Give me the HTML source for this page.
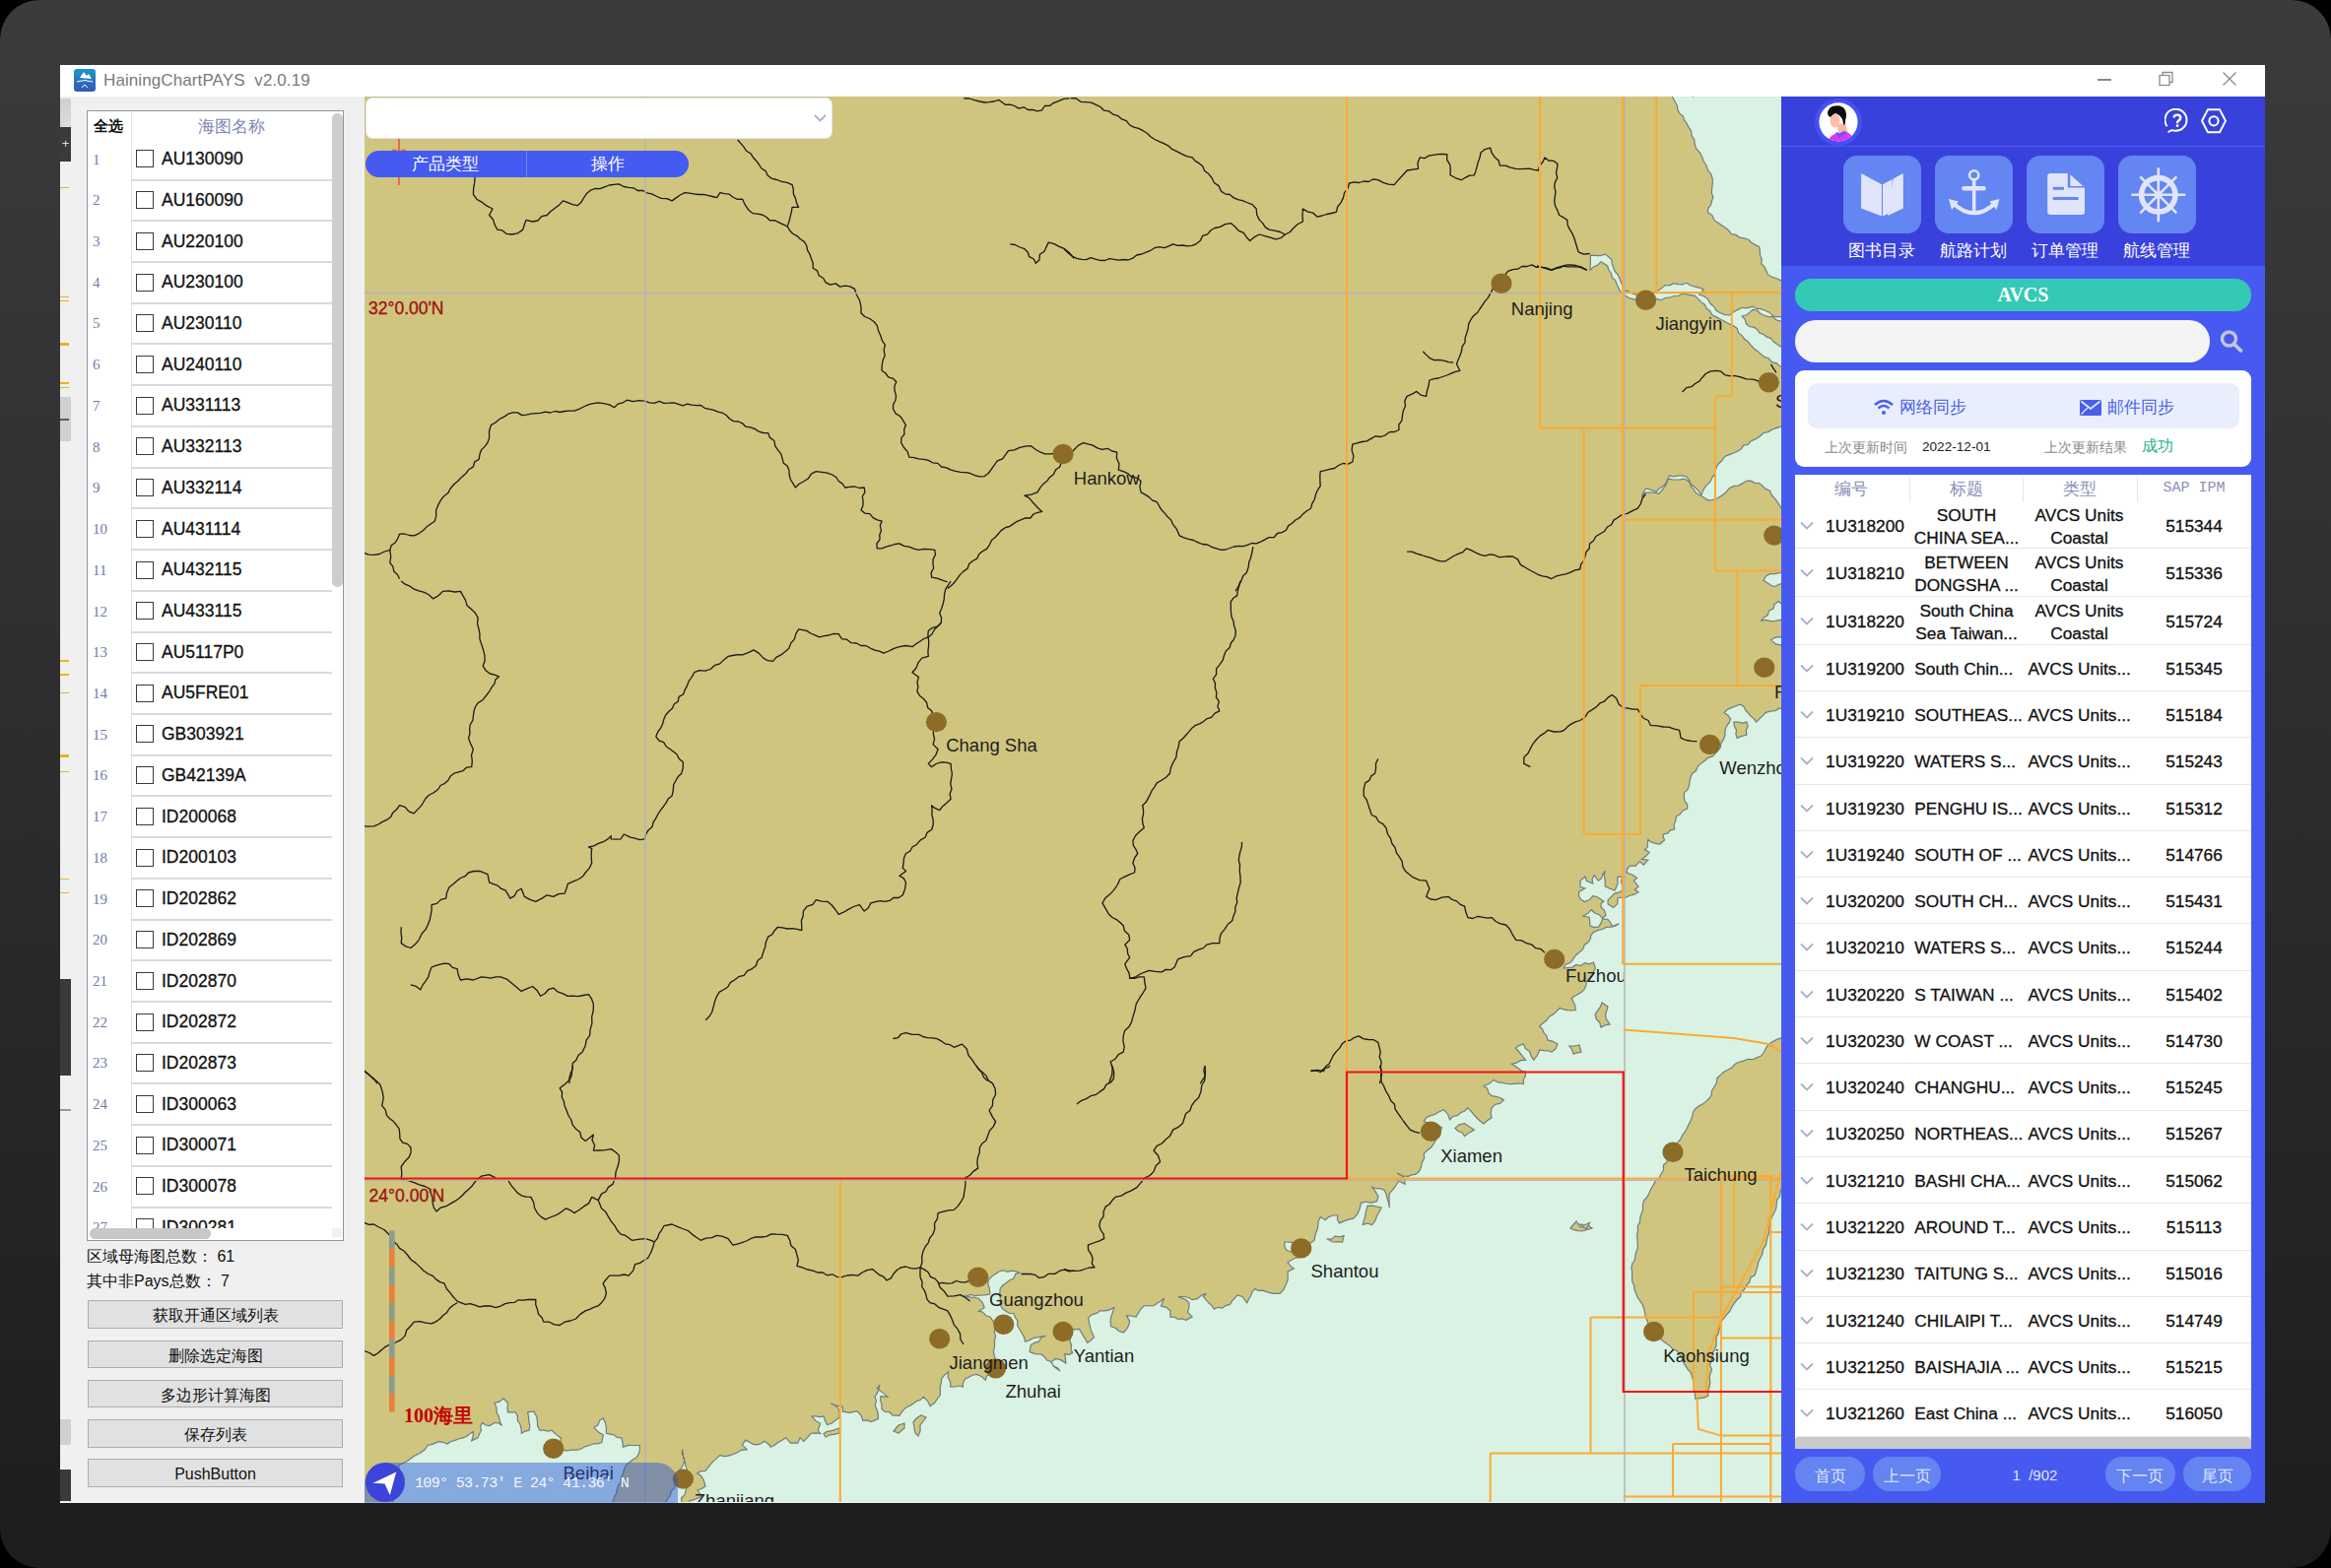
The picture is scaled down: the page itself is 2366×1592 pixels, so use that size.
<!DOCTYPE html>
<html><head><meta charset="utf-8">
<style>
*{margin:0;padding:0;box-sizing:border-box;}
html,body{width:2366px;height:1592px;overflow:hidden;background:#000;font-family:"Liberation Sans",sans-serif;}
.frame{position:absolute;left:0;top:0;width:2366px;height:1592px;border-radius:40px;background:linear-gradient(#3b3b3d,#1c1d1d);}
.abs{position:absolute;}
.win{position:absolute;left:61px;top:66px;width:2238px;height:1460px;background:#f0f0f0;overflow:hidden;}
.title{position:absolute;left:0;top:0;width:2238px;height:32px;background:#fff;}
.title .ttl{position:absolute;left:44px;top:6px;font-size:17px;color:#7a7a7a;letter-spacing:0.1px;white-space:pre;}
.appicon{position:absolute;left:14px;top:4px;width:22px;height:23px;border-radius:3px;background:linear-gradient(#1598c9,#3656b2);}
.strip{position:absolute;left:0;top:32px;width:11px;height:1428px;background:#f0f0f0;}
.tbl{position:absolute;left:27px;top:46px;width:261px;height:1148px;background:#fff;border:1.5px solid #8d95a8;overflow:hidden;}
.lr{position:absolute;left:0;width:258px;height:41.72px;}
.ln{position:absolute;left:5px;top:12px;font-size:15px;color:#737aaa;font-family:"Liberation Serif",serif;}
.cb{position:absolute;left:49px;top:10.8px;width:18px;height:18px;border:1.6px solid #3a3a3a;background:#fff;}
.lt{position:absolute;left:75px;top:9.5px;font-size:17.5px;color:#111;-webkit-text-stroke:0.3px #111;}
.sep{position:absolute;left:44px;top:40px;width:204px;height:2px;background:#d9d9e3;}
.ncol{position:absolute;left:44px;top:0;width:1px;height:1148px;background:#e3e3ea;}
.vscroll{position:absolute;left:248px;top:2px;width:10.8px;height:480.5px;background:#cdcdcd;border-radius:5.4px;}
.hscroll{position:absolute;left:2px;top:1134px;width:123px;height:11px;background:#c8c8c8;border-radius:6px;}
.btn{position:absolute;left:28px;width:259px;height:28.5px;background:#e1e1e1;border:1px solid #adadad;font-size:16px;color:#111;text-align:center;line-height:30px;}
.cnt{position:absolute;left:27px;font-size:16px;color:#111;}
.map{position:absolute;left:309px;top:32px;}
.dd{position:absolute;left:309.5px;top:33px;width:474px;height:41.5px;background:#fff;border:1px solid #dde1f0;border-radius:7px;}
.tabs{position:absolute;left:309.5px;top:86.7px;width:328.5px;height:27.5px;background:#445af1;border-radius:14px;color:#fff;font-size:16.5px;}
.tabs .t1{position:absolute;left:0;width:163px;top:3px;text-align:center;}
.tabs .t2{position:absolute;left:164px;width:164px;top:3px;text-align:center;}
.tabs .sp{position:absolute;left:163px;top:0;width:1px;height:27.5px;background:#7787f5;}
.pill{position:absolute;left:309px;top:1419.2px;width:317.6px;height:41px;border-radius:0 21px 0 0;background:rgba(33,79,216,0.45);border-top-right-radius:21px;border-top-left-radius:21px;}
.nav{position:absolute;left:310px;top:1419px;width:40px;height:40px;border-radius:20px;background:#3c44d9;}
.coord{position:absolute;left:360px;top:1432px;font-family:"Liberation Mono",monospace;font-size:15px;color:#f4f6ff;white-space:pre;letter-spacing:-0.65px;}
.rp{position:absolute;left:1747px;top:32px;width:491px;height:1428px;background:#465af2;}
.rph{position:absolute;left:0;top:0;width:491px;height:172px;background:#3941dc;}
.rpline{position:absolute;left:0;top:50px;width:491px;height:1px;background:#4c5cf0;}
.tile{position:absolute;top:59.7px;width:79px;height:79px;border-radius:14px;background:#6386f2;}
.tlab{position:absolute;top:145px;width:100px;text-align:center;color:#fff;font-size:16.7px;}
.avcs{position:absolute;left:14px;top:185px;width:463px;height:33px;border-radius:16px;background:#33c9b5;color:#fff;font-family:"Liberation Serif",serif;font-weight:bold;font-size:20px;text-align:center;line-height:33px;}
.search{position:absolute;left:14px;top:227px;width:421px;height:43px;border-radius:21px;background:#f4f4f4;}
.card{position:absolute;left:14px;top:278px;width:463px;height:98px;border-radius:9px;background:#fff;}
.inner{position:absolute;left:13px;top:13px;width:438px;height:46px;border-radius:9px;background:#e8eefc;color:#4a60ea;font-size:17px;}
.small{position:absolute;font-size:13.6px;color:#8a8a8a;top:70px;}
.table{position:absolute;left:14px;top:384px;width:463px;height:989px;background:#fff;overflow:hidden;}
.th{position:absolute;top:0;height:28px;width:463px;color:#8a90b8;font-size:17px;}
.th div{position:absolute;top:3px;text-align:center;}
.th .hs{position:absolute;top:2px;width:1px;height:26px;background:#e6e6ee;}
.tr{position:absolute;left:0;width:463px;height:47.35px;color:#111;font-size:17.3px;-webkit-text-stroke:0.3px #111;border-bottom:1.5px solid #e5e6f0;}
.tr div{position:absolute;text-align:center;line-height:23.5px;top:50%;transform:translateY(-50%);margin-top:1.5px;white-space:nowrap;}
.tr div.l2{text-align:left;left:121.3px;width:auto;}
.tr div.l3{text-align:left;left:236.5px;width:auto;}
.c1{left:28px;width:86px;}
.c2{left:116px;width:116px;}
.c3{left:232px;width:113px;}
.c4{left:345px;width:120px;}
.chev{position:absolute;left:5px;top:50%;margin-top:-4.5px;}
.hsb{position:absolute;left:0;top:977px;width:463px;height:12px;background:#c9c9c9;border-radius:4px 4px 0 0;}
.pg{position:absolute;top:1381px;height:35px;border-radius:17px;background:#6384f1;color:#dfe5fd;font-size:16px;text-align:center;line-height:39px;}
</style></head><body>
<div class="frame"></div>
<div class="win">
  <div class="title">
    <div class="appicon"><svg width="22" height="23" viewBox="0 0 22 23"><path d="M6,9 L10,3 L13,7 L15,5 L18,10 Z" fill="#fff"/><path d="M3,13 Q11,10 19,13" fill="none" stroke="#fff" stroke-width="1"/><path d="M8,19 L11,16 L14,19" fill="none" stroke="#fff" stroke-width="1"/></svg></div>
    <div class="ttl">HainingChartPAYS  v2.0.19</div>
    <div class="abs" style="left:2068px;top:14px;width:14px;height:1.5px;background:#8a8a8a"></div>
    <svg class="abs" style="left:2130px;top:6px" width="16" height="16" viewBox="0 0 16 16"><rect x="1" y="4.5" width="10" height="10" fill="none" stroke="#8a8a8a" stroke-width="1.3"/><polyline points="4,4.5 4,1.5 14,1.5 14,11.5 11,11.5" fill="none" stroke="#8a8a8a" stroke-width="1.3"/></svg>
    <svg class="abs" style="left:2194px;top:6px" width="16" height="16" viewBox="0 0 16 16"><path d="M1.5,1.5 L14.5,14.5 M14.5,1.5 L1.5,14.5" stroke="#8a8a8a" stroke-width="1.3"/></svg>
  </div>
  <div class="strip">
    <div class="abs" style="left:0px;top:1.6px;width:11px;height:29.8px;background:linear-gradient(#cfcfcf,#dddddd)"></div>
    <div class="abs" style="left:0px;top:31.4px;width:11px;height:34.5px;background:#3a3a3a"></div>
    <div class="abs" style="left:0px;top:91.7px;width:9px;height:1.6px;background:#f2b01e"></div>
    <div class="abs" style="left:0px;top:202.8px;width:9px;height:1.6px;background:#f2b01e"></div>
    <div class="abs" style="left:0px;top:206.5px;width:9px;height:1.6px;background:#f2b01e"></div>
    <div class="abs" style="left:0px;top:290.0px;width:9px;height:1.6px;background:#f2b01e"></div>
    <div class="abs" style="left:0px;top:294.6px;width:9px;height:1.6px;background:#f2b01e"></div>
    <div class="abs" style="left:0px;top:572.4px;width:9px;height:1.6px;background:#f2b01e"></div>
    <div class="abs" style="left:0px;top:586.2px;width:9px;height:1.6px;background:#f2b01e"></div>
    <div class="abs" style="left:0px;top:604.5px;width:9px;height:1.6px;background:#f2b01e"></div>
    <div class="abs" style="left:0px;top:684.9px;width:9px;height:1.6px;background:#f2b01e"></div>
    <div class="abs" style="left:0px;top:793.8px;width:9px;height:1.6px;background:#f2b01e"></div>
    <div class="abs" style="left:0px;top:807.6px;width:9px;height:1.6px;background:#f2b01e"></div>
    <div class="abs" style="left:0px;top:250.3px;width:9px;height:3.0px;background:#f2b01e"></div>
    <div class="abs" style="left:0px;top:668.1px;width:9px;height:3.0px;background:#f2b01e"></div>
    <div class="abs" style="left:0px;top:304.6px;width:11px;height:45.9px;background:#d0d0d0"></div>
    <div class="abs" style="left:0px;top:327.0px;width:9px;height:1.5px;background:#5a5a5a"></div>
    <div class="abs" style="left:0px;top:895.7px;width:11px;height:98.7px;background:#3a3a3a"></div>
    <div class="abs" style="left:0px;top:1028.0px;width:11px;height:1.5px;background:#9a9a9a"></div>
    <div class="abs" style="left:0px;top:1343.0px;width:11px;height:25.6px;background:#d0d0d0"></div>
    <div class="abs" style="left:0px;top:1393.8px;width:11px;height:32.2px;background:#3a3a3a"></div>
    <div class="abs" style="left:0;top:31.4px;width:11px;height:34.5px;color:#ddd;font-size:13px;line-height:34px;text-align:center">+</div>
  </div>
  <div class="tbl">
    <div class="ncol"></div>
    <div class="abs" style="left:6px;top:6px;font-size:15px;font-weight:bold;color:#111">全选</div>
    <div class="abs" style="left:112px;top:4px;font-size:17px;color:#8188b5">海图名称</div>
<div class="lr" style="top:28.60px"><span class="ln">1</span><span class="cb"></span><span class="lt">AU130090</span><div class="sep"></div></div>
<div class="lr" style="top:70.32px"><span class="ln">2</span><span class="cb"></span><span class="lt">AU160090</span><div class="sep"></div></div>
<div class="lr" style="top:112.04px"><span class="ln">3</span><span class="cb"></span><span class="lt">AU220100</span><div class="sep"></div></div>
<div class="lr" style="top:153.76px"><span class="ln">4</span><span class="cb"></span><span class="lt">AU230100</span><div class="sep"></div></div>
<div class="lr" style="top:195.48px"><span class="ln">5</span><span class="cb"></span><span class="lt">AU230110</span><div class="sep"></div></div>
<div class="lr" style="top:237.20px"><span class="ln">6</span><span class="cb"></span><span class="lt">AU240110</span><div class="sep"></div></div>
<div class="lr" style="top:278.92px"><span class="ln">7</span><span class="cb"></span><span class="lt">AU331113</span><div class="sep"></div></div>
<div class="lr" style="top:320.64px"><span class="ln">8</span><span class="cb"></span><span class="lt">AU332113</span><div class="sep"></div></div>
<div class="lr" style="top:362.36px"><span class="ln">9</span><span class="cb"></span><span class="lt">AU332114</span><div class="sep"></div></div>
<div class="lr" style="top:404.08px"><span class="ln">10</span><span class="cb"></span><span class="lt">AU431114</span><div class="sep"></div></div>
<div class="lr" style="top:445.80px"><span class="ln">11</span><span class="cb"></span><span class="lt">AU432115</span><div class="sep"></div></div>
<div class="lr" style="top:487.52px"><span class="ln">12</span><span class="cb"></span><span class="lt">AU433115</span><div class="sep"></div></div>
<div class="lr" style="top:529.24px"><span class="ln">13</span><span class="cb"></span><span class="lt">AU5117P0</span><div class="sep"></div></div>
<div class="lr" style="top:570.96px"><span class="ln">14</span><span class="cb"></span><span class="lt">AU5FRE01</span><div class="sep"></div></div>
<div class="lr" style="top:612.68px"><span class="ln">15</span><span class="cb"></span><span class="lt">GB303921</span><div class="sep"></div></div>
<div class="lr" style="top:654.40px"><span class="ln">16</span><span class="cb"></span><span class="lt">GB42139A</span><div class="sep"></div></div>
<div class="lr" style="top:696.12px"><span class="ln">17</span><span class="cb"></span><span class="lt">ID200068</span><div class="sep"></div></div>
<div class="lr" style="top:737.84px"><span class="ln">18</span><span class="cb"></span><span class="lt">ID200103</span><div class="sep"></div></div>
<div class="lr" style="top:779.56px"><span class="ln">19</span><span class="cb"></span><span class="lt">ID202862</span><div class="sep"></div></div>
<div class="lr" style="top:821.28px"><span class="ln">20</span><span class="cb"></span><span class="lt">ID202869</span><div class="sep"></div></div>
<div class="lr" style="top:863.00px"><span class="ln">21</span><span class="cb"></span><span class="lt">ID202870</span><div class="sep"></div></div>
<div class="lr" style="top:904.72px"><span class="ln">22</span><span class="cb"></span><span class="lt">ID202872</span><div class="sep"></div></div>
<div class="lr" style="top:946.44px"><span class="ln">23</span><span class="cb"></span><span class="lt">ID202873</span><div class="sep"></div></div>
<div class="lr" style="top:988.16px"><span class="ln">24</span><span class="cb"></span><span class="lt">ID300063</span><div class="sep"></div></div>
<div class="lr" style="top:1029.88px"><span class="ln">25</span><span class="cb"></span><span class="lt">ID300071</span><div class="sep"></div></div>
<div class="lr" style="top:1071.60px"><span class="ln">26</span><span class="cb"></span><span class="lt">ID300078</span><div class="sep"></div></div>
<div class="lr" style="top:1113.32px"><span class="ln">27</span><span class="cb"></span><span class="lt">ID300281</span><div class="sep"></div></div>
    <div class="vscroll"></div>
    <div class="abs" style="left:0;top:1133.5px;width:258px;height:13px;background:#fff"></div>
    <div class="hscroll"></div>
    <div class="abs" style="left:248px;top:1133.8px;width:10px;height:9.5px;background:#f0f0f0"></div>
  </div>
  <div class="cnt" style="top:1200px">区域母海图总数：  61</div>
  <div class="cnt" style="top:1224.5px">其中非Pays总数：  7</div>
  <div class="btn" style="top:1254.3px">获取开通区域列表</div>
  <div class="btn" style="top:1294.5px">删除选定海图</div>
  <div class="btn" style="top:1334.6px">多边形计算海图</div>
  <div class="btn" style="top:1375px">保存列表</div>
  <div class="btn" style="top:1415.3px">PushButton</div>
  <svg class="map" width="1438" height="1427" viewBox="370 98 1438 1427" xmlns="http://www.w3.org/2000/svg">
<defs><clipPath id="cf"><rect x="370" y="98" width="1278" height="1427"/></clipPath></defs>
<rect x="370" y="98" width="1438" height="1427" fill="#cfc57e"/>
<polygon points="1697.7,98.7 1699.9,102.8 1702.2,107.0 1703.1,111.7 1705.0,115.4 1708.4,118.0 1709.6,122.1 1712.1,125.4 1714.0,129.0 1716.6,133.0 1717.0,137.7 1719.7,141.7 1720.2,146.3 1721.6,150.7 1725.1,154.5 1727.5,158.9 1729.2,163.7 1731.9,168.0 1733.5,172.8 1736.7,176.7 1738.2,181.4 1738.3,186.2 1737.7,191.1 1737.3,195.9 1738.9,200.6 1737.4,204.3 1736.5,208.3 1733.7,211.6 1733.5,215.8 1737.9,218.6 1740.1,223.7 1744.3,226.6 1747.9,228.9 1751.4,231.3 1754.7,234.0 1757.3,237.5 1761.8,238.4 1765.8,241.1 1770.4,241.8 1774.6,243.3 1777.8,246.3 1781.6,248.6 1785.5,250.5 1786.4,254.8 1786.5,259.2 1788.3,263.4 1787.7,267.8 1790.9,270.9 1792.7,274.7 1794.2,278.7 1798.7,281.3 1803.7,282.8 1808.3,285.2 1811.6,285.2 1811.1,281.2 1811.8,277.2 1811.4,273.1 1811.0,269.1 1812.3,265.1 1812.1,261.1 1810.9,257.1 1811.8,253.1 1811.6,249.1 1812.5,245.0 1812.2,241.0 1811.0,237.0 1812.8,233.0 1810.6,229.0 1811.4,225.0 1812.2,221.0 1810.7,216.9 1811.5,212.9 1810.4,208.9 1812.0,204.9 1812.3,200.9 1811.8,196.9 1812.5,192.9 1811.1,188.8 1812.1,184.8 1811.8,180.8 1811.8,176.8 1811.5,172.8 1812.5,168.8 1812.7,164.8 1811.5,160.7 1812.0,156.7 1810.4,152.7 1812.1,148.7 1811.9,144.7 1812.8,140.7 1812.4,136.6 1811.0,132.6 1811.3,128.6 1812.0,124.6 1810.3,120.6 1811.5,116.6 1810.7,112.6 1810.6,108.5 1810.4,104.5 1812.3,100.5 1811.6,96.5 1807.5,97.5 1803.4,97.2 1799.4,96.8 1795.3,95.5 1791.2,97.6 1787.2,96.6 1783.1,96.4 1779.0,95.5 1775.0,95.7 1770.9,95.6 1766.8,97.1 1762.8,96.7 1758.7,96.9 1754.6,95.5 1750.6,95.3 1746.5,97.4 1742.4,97.3 1738.4,97.2 1734.3,97.2 1730.2,96.5 1726.2,96.3 1722.1,97.1 1718.0,97.8 1714.0,96.7 1709.9,96.8 1705.8,96.3 1701.8,95.3 1697.7,96.5 1697.7,98.7" fill="#d9f2e3" stroke="#6f7d7d" stroke-width="1.2"/>
<polygon points="1743.3,472.0 1747.4,468.0 1750.8,463.4 1755.2,461.6 1759.6,460.0 1763.9,458.0 1767.4,455.9 1769.7,452.1 1774.2,451.5 1776.9,448.2 1781.6,445.9 1786.1,443.2 1789.9,439.5 1794.7,438.6 1799.0,436.0 1803.6,434.4 1808.3,433.0 1811.6,433.0 1812.6,437.1 1811.2,441.1 1812.7,445.1 1812.7,449.2 1812.3,453.2 1812.4,457.3 1812.0,461.3 1812.7,465.3 1812.9,469.4 1812.5,473.4 1812.6,477.5 1811.9,481.5 1812.8,485.6 1810.6,489.6 1811.3,493.6 1812.5,497.7 1812.2,501.7 1812.0,505.8 1811.9,509.8 1812.5,513.8 1810.7,517.9 1811.6,521.9 1810.5,517.7 1807.2,514.7 1805.1,511.1 1802.1,506.8 1798.4,503.0 1796.4,498.1 1792.2,496.4 1788.9,493.3 1785.5,490.5 1781.1,490.4 1777.0,488.2 1772.5,488.3 1768.5,490.9 1764.3,493.1 1759.5,493.7 1755.2,495.7 1752.2,499.5 1748.7,502.4 1743.3,505.7 1738.6,507.6 1733.5,507.8 1729.2,505.0 1724.8,502.4 1721.1,500.4 1719.1,496.6 1716.1,493.7 1715.1,488.4 1711.8,484.0 1707.5,482.8 1703.2,482.9 1698.8,483.8 1694.5,482.9 1692.6,486.7 1690.9,490.6 1688.0,493.7 1684.2,495.9 1681.4,499.2 1676.0,497.4 1670.6,495.9 1667.8,499.9 1666.3,504.6 1669.5,500.2 1674.3,500.2 1679.0,500.2 1683.6,501.3 1686.7,498.0 1689.6,494.4 1691.7,490.4 1693.4,486.1 1697.4,486.9 1701.5,487.0 1705.6,486.8 1709.6,486.1 1713.7,488.5 1716.8,492.0 1720.5,494.8 1724.0,498.4 1727.0,502.4 1728.9,497.4 1731.7,493.1 1735.7,489.4 1737.9,484.8 1741.1,480.7 1741.6,476.2 1743.3,472.0" fill="#d9f2e3" stroke="#6f7d7d" stroke-width="1.2"/>
<polygon points="1614.2,259.2 1619.3,259.3 1624.4,259.6 1629.4,258.1 1632.7,260.7 1635.9,263.5 1636.3,267.8 1637.7,271.8 1639.3,275.7 1642.2,279.1 1644.0,282.9 1645.5,286.8 1647.1,290.7 1647.8,294.9 1652.8,295.7 1657.1,298.1 1661.9,299.3 1667.0,299.5 1671.8,298.5 1676.6,296.8 1681.4,296.0 1686.0,293.1 1690.1,289.5 1694.5,289.9 1698.7,287.6 1703.2,288.6 1707.6,288.8 1711.8,287.3 1715.9,289.7 1720.3,291.2 1724.8,292.2 1729.2,293.9 1724.8,299.3 1729.5,300.7 1733.5,303.6 1735.8,308.0 1739.6,311.3 1742.2,315.5 1746.3,317.7 1750.5,319.6 1755.2,319.9 1759.4,317.1 1763.7,314.6 1768.2,312.3 1773.7,312.9 1779.0,311.2 1782.9,313.4 1787.5,313.7 1791.6,315.2 1795.6,316.9 1799.0,320.3 1803.1,321.7 1807.8,321.7 1811.6,324.2 1810.7,328.4 1810.3,332.5 1811.2,336.7 1812.0,340.8 1811.4,345.0 1812.5,349.2 1812.8,353.3 1810.3,357.5 1811.2,361.6 1811.5,365.8 1810.4,369.9 1811.6,374.1 1807.2,372.1 1803.3,368.9 1798.6,367.6 1795.5,364.0 1790.9,362.4 1787.3,359.4 1783.8,356.4 1780.1,353.7 1776.9,350.2 1774.1,346.8 1770.6,344.2 1768.0,340.6 1764.6,337.9 1763.2,333.3 1759.5,330.7 1755.0,328.9 1750.8,326.5 1746.5,324.2 1742.3,321.9 1737.8,319.9 1735.9,316.0 1732.3,313.5 1730.5,309.4 1727.0,306.9 1723.7,303.6 1720.5,300.4 1716.2,299.6 1711.8,298.9 1707.5,298.2 1703.4,300.5 1698.8,300.5 1694.7,302.2 1690.1,302.5 1686.0,304.7 1681.3,303.5 1677.3,306.0 1672.8,306.1 1668.4,306.9 1663.5,304.9 1658.4,303.8 1653.3,302.5 1648.6,299.6 1644.6,296.0 1642.8,292.3 1641.0,288.5 1639.7,284.5 1636.2,281.6 1635.4,277.4 1632.8,274.0 1631.6,270.0 1625.1,265.7 1621.8,269.0 1617.4,270.9 1614.2,274.3 1614.2,269.3 1614.4,264.2 1614.2,259.2" fill="#d9f2e3" stroke="#6f7d7d" stroke-width="1.2"/>
<polygon points="1815.2,718.5 1810.5,718.8 1805.9,719.4 1801.6,721.6 1796.9,722.1 1792.4,723.4 1789.2,726.6 1785.9,729.9 1782.7,733.1 1780.3,729.8 1777.2,727.3 1774.6,724.1 1771.8,721.2 1770.0,717.5 1766.4,715.2 1762.1,716.8 1757.8,718.4 1753.7,720.3 1750.1,723.4 1753.8,726.2 1756.6,729.9 1754.9,733.9 1752.3,737.6 1750.9,741.8 1751.0,746.5 1749.4,750.6 1747.0,754.3 1746.3,758.8 1743.6,762.4 1740.8,765.4 1737.8,768.2 1733.6,769.4 1730.6,772.2 1726.8,774.9 1723.4,778.0 1721.5,782.6 1717.6,785.2 1716.0,789.4 1715.0,793.8 1714.4,798.2 1712.7,802.0 1709.5,804.7 1709.3,809.0 1709.9,813.1 1712.6,816.8 1712.7,821.0 1708.3,822.7 1705.3,826.6 1701.3,829.1 1700.8,833.4 1699.0,837.6 1699.7,842.1 1695.6,842.9 1692.5,846.2 1688.3,847.0 1688.2,850.0 1689.6,852.8 1684.7,857.0 1680.5,856.3 1676.3,855.3 1672.8,852.5 1672.4,856.5 1672.1,860.5 1669.3,862.6 1674.2,865.4 1670.6,869.2 1666.5,872.4 1672.8,873.1 1668.2,878.1 1664.4,874.6 1660.2,879.1 1654.5,879.1 1651.7,882.3 1651.0,886.1 1656.7,888.0 1661.6,891.4 1658.4,894.2 1663.0,900.2 1659.4,903.3 1663.0,905.8 1658.7,908.2 1653.8,909.2 1649.6,911.7 1646.8,911.0 1641.9,911.7 1641.9,917.3 1637.7,921.6 1632.1,918.0 1632.1,913.8 1635.6,910.3 1638.7,907.1 1643.1,906.2 1646.8,904.0 1646.6,899.3 1645.5,894.7 1646.8,890.0 1641.9,890.3 1641.9,897.7 1639.1,904.0 1634.0,902.3 1629.3,899.8 1629.1,893.8 1628.2,887.9 1629.3,884.4 1626.9,887.6 1625.6,891.6 1622.3,894.2 1618.1,888.6 1616.2,892.6 1616.7,897.0 1610.3,894.2 1608.9,890.0 1604.0,894.2 1604.0,900.5 1608.9,901.9 1602.6,905.4 1602.6,910.3 1605.1,913.5 1608.6,915.6 1613.4,913.6 1616.7,909.6 1620.9,910.5 1624.4,912.8 1627.9,915.2 1625.1,917.3 1625.1,920.9 1628.6,924.5 1630.0,929.3 1626.5,932.1 1623.2,928.7 1618.7,927.0 1615.3,923.7 1611.6,927.6 1606.8,930.0 1613.1,931.4 1613.7,935.6 1613.9,939.8 1617.9,941.6 1622.3,941.2 1625.1,937.4 1626.5,932.8 1632.1,933.5 1634.7,936.7 1636.3,940.5 1643.3,937.7 1639.5,940.3 1634.9,941.2 1630.4,941.4 1626.4,943.5 1622.2,944.4 1618.1,946.1 1614.6,949.6 1614.6,952.4 1612.2,956.6 1608.2,959.4 1606.7,963.7 1603.2,966.8 1599.6,969.7 1596.9,973.4 1594.3,977.3 1589.4,979.0 1587.0,983.0 1591.4,982.5 1595.8,982.1 1599.8,979.4 1604.6,980.5 1608.5,977.6 1613.2,978.8 1617.4,977.0 1619.4,983.0 1617.5,986.5 1615.7,990.2 1613.2,993.3 1610.4,996.3 1609.9,1000.7 1608.1,1004.3 1605.3,1007.3 1600.2,1010.3 1595.1,1013.4 1597.1,1017.2 1598.8,1021.1 1599.2,1025.5 1595.0,1025.9 1591.0,1025.7 1587.0,1024.8 1583.0,1023.5 1579.9,1026.9 1576.6,1029.9 1572.4,1032.1 1569.8,1036.0 1566.1,1038.7 1562.7,1041.7 1565.5,1044.8 1567.1,1048.6 1569.9,1051.7 1570.8,1055.9 1576.1,1057.3 1581.0,1060.0 1579.0,1064.8 1574.9,1068.1 1570.9,1066.8 1566.8,1066.6 1562.7,1066.0 1560.4,1071.5 1556.7,1076.2 1554.1,1072.2 1552.6,1067.5 1548.2,1064.6 1546.5,1060.0 1542.1,1061.3 1538.4,1064.0 1541.9,1068.0 1545.2,1072.1 1548.6,1076.2 1543.6,1076.7 1539.2,1079.1 1534.4,1080.2 1537.9,1082.2 1541.3,1084.7 1544.4,1087.4 1548.6,1088.3 1548.3,1092.4 1546.3,1096.3 1546.5,1100.5 1542.5,1100.0 1538.4,1100.1 1534.3,1100.7 1530.3,1100.5 1525.5,1099.5 1520.6,1098.9 1516.2,1096.4 1511.6,1100.3 1506.0,1102.5 1509.6,1105.2 1510.9,1109.6 1514.1,1112.6 1518.4,1113.4 1522.5,1114.5 1526.3,1116.7 1522.8,1120.3 1517.7,1121.4 1514.1,1124.8 1513.1,1129.8 1514.1,1134.9 1509.8,1137.6 1506.0,1141.0 1502.4,1138.2 1499.0,1135.0 1495.9,1131.7 1493.0,1128.1 1489.8,1124.8 1486.7,1128.0 1482.6,1129.8 1479.2,1132.6 1474.6,1133.5 1471.6,1136.9 1469.6,1131.2 1465.5,1126.8 1460.8,1128.7 1456.4,1131.5 1451.4,1132.9 1447.5,1135.0 1445.3,1138.9 1450.0,1140.0 1454.5,1141.6 1459.4,1142.2 1463.5,1145.0 1461.8,1149.2 1459.5,1153.1 1457.4,1157.1 1455.4,1161.2 1452.6,1165.1 1448.7,1167.9 1445.3,1171.3 1445.7,1175.9 1443.5,1180.0 1442.5,1184.9 1440.3,1189.5 1437.0,1192.1 1433.0,1192.9 1429.2,1194.3 1423.3,1193.8 1418.1,1191.1 1422.8,1193.3 1426.0,1197.5 1426.0,1202.2 1419.7,1199.0 1416.9,1203.5 1413.9,1207.9 1410.2,1211.7 1410.0,1216.5 1410.1,1221.2 1410.2,1226.0 1409.6,1221.5 1408.2,1217.2 1407.1,1212.8 1405.4,1208.6 1401.4,1206.6 1396.9,1206.7 1392.7,1205.4 1396.2,1209.9 1399.0,1214.9 1397.5,1219.7 1391.1,1221.3 1386.3,1220.0 1381.6,1221.3 1380.0,1227.6 1377.6,1232.9 1373.7,1237.1 1368.7,1238.1 1364.0,1239.9 1359.4,1241.9 1357.4,1238.2 1357.8,1234.0 1353.0,1234.0 1348.6,1235.6 1345.1,1238.7 1340.3,1235.6 1338.2,1239.6 1337.8,1244.0 1337.1,1248.3 1335.0,1253.7 1334.0,1259.4 1330.2,1262.0 1327.6,1265.7 1323.5,1265.8 1319.7,1264.1 1315.7,1263.3 1311.9,1261.7 1307.9,1261.0 1303.8,1261.0 1303.8,1265.1 1305.4,1268.9 1309.3,1270.7 1313.3,1272.1 1318.1,1276.8 1314.0,1277.5 1310.5,1279.6 1307.0,1281.6 1309.8,1285.1 1313.3,1287.9 1307.0,1291.1 1307.2,1295.4 1307.1,1299.7 1305.4,1303.8 1303.0,1309.1 1299.0,1313.3 1292.7,1313.3 1287.1,1312.1 1281.6,1310.2 1277.4,1310.4 1273.7,1308.6 1270.9,1311.7 1269.6,1315.7 1267.4,1319.2 1265.7,1322.9 1261.0,1316.5 1256.2,1314.9 1253.3,1317.9 1250.6,1320.9 1248.3,1324.4 1244.3,1325.6 1240.7,1328.0 1236.2,1327.3 1232.4,1329.2 1230.1,1325.6 1226.9,1322.8 1224.1,1319.6 1221.3,1316.5 1224.4,1313.3 1219.5,1315.1 1215.4,1318.6 1210.2,1319.7 1206.4,1317.5 1202.2,1316.5 1195.9,1316.5 1199.9,1318.1 1203.9,1319.8 1207.0,1322.9 1206.8,1327.8 1205.4,1332.4 1210.2,1337.1 1203.8,1340.3 1199.9,1338.9 1195.7,1339.5 1192.0,1337.3 1187.9,1337.1 1187.9,1330.8 1183.7,1327.3 1178.4,1326.0 1180.0,1322.0 1181.6,1318.1 1178.1,1321.0 1174.2,1323.4 1170.5,1326.0 1165.8,1325.5 1161.0,1326.0 1157.8,1329.3 1155.4,1333.2 1153.0,1337.1 1148.3,1336.0 1143.5,1335.6 1146.7,1341.9 1145.5,1346.1 1143.2,1349.8 1140.3,1353.0 1135.8,1351.5 1132.1,1348.2 1127.6,1346.7 1127.1,1341.9 1127.6,1337.1 1129.4,1332.4 1130.8,1327.6 1126.3,1329.9 1121.5,1330.8 1116.5,1330.8 1113.1,1333.4 1108.9,1334.6 1105.4,1337.1 1104.8,1339.2 1106.0,1345.0 1107.0,1349.4 1108.6,1353.6 1110.5,1357.6 1107.4,1360.9 1103.7,1363.3 1101.7,1359.8 1099.6,1356.4 1097.5,1353.0 1095.6,1349.5 1090.3,1349.9 1085.3,1348.4 1084.9,1352.8 1087.2,1356.9 1085.8,1361.5 1087.6,1365.6 1087.0,1369.8 1088.7,1373.6 1084.9,1375.4 1080.7,1374.8 1081.4,1379.4 1081.8,1384.0 1077.0,1380.9 1071.5,1379.4 1067.0,1382.8 1069.2,1386.7 1073.2,1388.8 1076.1,1392.0 1072.5,1389.6 1069.1,1386.8 1067.1,1382.5 1062.6,1381.1 1060.0,1377.5 1056.6,1374.8 1050.7,1374.6 1045.1,1372.5 1046.3,1365.6 1050.1,1363.4 1054.4,1362.0 1057.0,1357.9 1061.2,1356.4 1054.3,1357.6 1049.4,1358.3 1045.1,1360.6 1040.5,1362.2 1039.5,1357.6 1037.2,1353.5 1034.8,1349.5 1032.7,1345.7 1032.9,1341.1 1030.4,1337.5 1029.0,1333.5 1024.7,1333.5 1021.0,1331.2 1017.2,1328.6 1015.3,1324.3 1015.3,1320.3 1015.2,1316.2 1014.8,1312.2 1015.3,1308.2 1018.0,1304.8 1021.5,1302.5 1024.7,1299.8 1028.9,1298.1 1030.7,1293.8 1034.8,1292.1 1030.9,1290.9 1026.9,1290.1 1022.6,1291.4 1018.7,1289.8 1014.4,1290.7 1010.8,1293.2 1007.2,1295.6 1004.0,1298.5 1002.6,1302.5 1004.3,1308.1 1004.9,1314.0 999.2,1314.9 993.5,1315.1 989.5,1315.7 985.4,1314.4 981.4,1315.7 977.4,1316.2 981.5,1316.4 985.5,1317.2 989.6,1317.3 993.5,1318.5 997.3,1322.5 999.2,1327.7 993.5,1331.2 997.8,1332.2 1000.7,1335.8 1004.9,1336.9 1008.3,1341.8 1010.7,1347.2 1009.2,1351.7 1010.5,1356.5 1009.5,1361.0 1009.6,1366.8 1008.4,1372.5 1009.5,1377.1 1010.7,1381.7 1009.7,1386.6 1007.2,1390.9 1005.2,1394.5 1001.6,1397.1 1000.3,1401.2 996.3,1397.5 991.2,1395.4 987.1,1396.2 983.4,1398.2 979.7,1400.0 977.5,1403.8 977.4,1408.1 973.2,1407.0 969.0,1408.0 964.8,1408.1 964.6,1403.0 962.1,1398.3 962.5,1393.1 958.6,1396.1 955.6,1400.0 955.4,1404.0 954.3,1408.0 954.3,1412.0 954.4,1416.1 951.4,1420.3 948.4,1424.5 944.1,1427.6 941.5,1422.3 937.2,1418.4 934.3,1421.3 930.4,1422.6 927.1,1424.9 923.7,1427.1 920.0,1428.7 916.0,1432.7 913.0,1437.4 905.8,1436.8 902.8,1433.7 898.3,1433.3 895.0,1430.8 895.0,1426.4 893.7,1422.0 893.8,1417.6 901.0,1418.2 897.5,1415.1 893.6,1412.4 890.2,1409.2 892.6,1406.8 891.9,1410.9 890.3,1414.6 888.0,1418.0 889.4,1422.4 888.3,1427.2 890.0,1431.5 891.4,1435.9 891.4,1440.5 884.2,1443.5 880.1,1441.9 875.8,1442.3 873.9,1436.8 869.8,1432.6 862.6,1434.4 855.4,1433.2 855.4,1428.4 851.4,1427.3 847.1,1426.9 843.4,1424.8 847.4,1426.5 850.6,1429.6 852.3,1434.3 851.8,1439.2 848.0,1442.0 844.4,1445.0 839.8,1446.5 837.4,1442.5 836.2,1438.0 832.2,1438.6 828.1,1437.8 824.1,1438.0 827.7,1442.4 832.6,1445.3 830.2,1452.5 832.6,1455.5 827.8,1454.9 823.0,1455.5 819.5,1459.6 815.7,1463.3 812.1,1459.7 809.7,1465.1 802.5,1465.1 797.7,1459.7 793.9,1462.3 789.9,1464.4 786.2,1467.2 782.1,1469.3 780.9,1466.9 776.1,1463.3 772.7,1465.5 768.9,1466.9 764.5,1466.4 760.7,1464.2 756.9,1462.1 753.3,1466.9 758.1,1471.7 752.3,1472.3 747.3,1475.3 741.3,1477.7 735.9,1478.7 730.5,1477.7 727.3,1480.9 723.8,1483.9 720.8,1487.3 716.0,1493.3 711.5,1493.6 707.6,1495.7 711.3,1498.3 714.0,1502.0 716.0,1509.0 712.3,1511.5 708.0,1513.0 712.0,1519.0 708.3,1521.3 704.1,1522.6 700.0,1524.0 698.0,1530.0 702.0,1529.9 706.0,1531.2 710.0,1530.9 714.0,1531.0 718.0,1528.8 722.0,1528.8 726.0,1530.5 730.0,1531.0 734.0,1529.9 738.0,1530.2 742.0,1528.7 746.0,1529.7 750.0,1531.1 754.0,1530.8 758.0,1530.9 762.0,1531.2 766.0,1529.3 770.0,1529.0 774.0,1529.1 778.0,1530.1 782.0,1530.5 786.0,1531.1 790.0,1530.6 794.0,1530.4 798.0,1530.7 802.0,1529.9 806.0,1530.1 810.0,1528.8 814.0,1530.7 818.0,1529.3 822.0,1531.1 826.0,1530.4 830.0,1529.5 834.0,1529.0 838.0,1529.4 842.0,1530.4 846.0,1530.5 850.0,1529.0 854.0,1528.9 858.0,1530.1 862.0,1530.2 866.0,1529.7 870.0,1529.3 874.0,1530.3 878.0,1528.7 882.0,1529.5 886.0,1529.9 890.0,1531.2 894.0,1530.4 898.0,1531.0 902.0,1529.9 906.0,1529.3 910.0,1529.3 914.0,1531.2 918.0,1530.5 922.0,1529.5 926.0,1528.8 930.0,1530.0 934.0,1530.5 938.0,1529.8 942.0,1529.4 946.0,1530.4 950.0,1531.1 954.0,1529.3 958.0,1528.8 962.0,1529.6 966.0,1529.8 970.0,1530.5 974.0,1529.2 978.0,1530.8 982.0,1530.6 986.0,1530.0 990.0,1529.2 994.0,1531.2 998.0,1529.5 1002.0,1530.8 1006.0,1529.3 1010.0,1529.3 1014.0,1530.7 1018.0,1529.5 1022.0,1531.2 1026.0,1530.0 1030.0,1529.2 1034.0,1529.3 1038.0,1529.8 1042.0,1530.4 1046.0,1531.2 1050.0,1529.1 1054.0,1529.7 1058.0,1529.3 1062.0,1531.2 1066.0,1529.1 1070.0,1528.8 1074.0,1528.9 1078.0,1529.7 1082.0,1531.0 1086.0,1531.0 1090.0,1530.6 1094.0,1531.3 1098.0,1531.1 1102.0,1529.6 1106.0,1529.2 1110.0,1531.1 1114.0,1530.6 1118.0,1528.8 1122.0,1530.4 1126.0,1529.7 1130.0,1529.7 1134.0,1529.6 1138.0,1529.1 1142.0,1528.7 1146.0,1529.4 1150.0,1529.6 1154.0,1531.2 1158.0,1529.0 1162.0,1531.2 1166.0,1529.2 1170.0,1529.6 1174.0,1530.8 1178.0,1530.8 1182.0,1529.8 1186.0,1528.8 1190.0,1529.9 1194.0,1529.7 1198.0,1531.1 1202.0,1529.2 1206.0,1529.6 1210.0,1531.0 1214.0,1528.8 1218.0,1529.8 1222.0,1530.8 1226.0,1530.7 1230.0,1528.8 1234.0,1528.8 1238.0,1528.9 1242.0,1531.1 1246.0,1529.4 1250.0,1530.6 1254.0,1531.0 1258.0,1529.6 1262.0,1529.4 1266.0,1531.2 1270.0,1530.3 1274.0,1529.4 1278.0,1530.6 1282.0,1529.5 1286.0,1529.4 1290.0,1528.7 1294.0,1530.7 1298.0,1531.1 1302.0,1530.3 1306.0,1531.2 1310.0,1528.8 1314.0,1529.3 1318.0,1529.9 1322.0,1531.2 1326.0,1531.2 1330.0,1529.7 1334.0,1529.4 1338.0,1529.8 1342.0,1530.0 1346.0,1531.1 1350.0,1529.2 1354.0,1530.8 1358.0,1530.6 1362.0,1530.8 1366.0,1530.7 1370.0,1530.3 1374.0,1529.6 1378.0,1529.5 1382.0,1529.6 1386.0,1530.7 1390.0,1528.9 1394.0,1529.2 1398.0,1530.7 1402.0,1529.3 1406.0,1528.9 1410.0,1528.8 1414.0,1530.1 1418.0,1529.5 1422.0,1531.2 1426.0,1531.0 1430.0,1531.3 1434.0,1529.4 1438.0,1528.9 1442.0,1529.0 1446.0,1530.0 1450.0,1530.5 1454.0,1529.9 1458.0,1529.3 1462.0,1529.8 1466.0,1530.3 1470.0,1530.5 1474.0,1530.6 1478.0,1530.9 1482.0,1530.4 1486.0,1529.0 1490.0,1530.9 1494.0,1529.5 1498.0,1530.2 1502.0,1529.7 1506.0,1530.6 1510.0,1529.2 1514.0,1529.3 1518.0,1529.3 1522.0,1529.1 1526.0,1531.0 1530.0,1530.2 1534.0,1529.5 1538.0,1529.7 1542.0,1531.3 1546.0,1530.0 1550.0,1529.3 1554.0,1530.8 1558.0,1530.4 1562.0,1531.3 1566.0,1529.0 1570.0,1529.9 1574.0,1530.8 1578.0,1530.9 1582.0,1531.1 1586.0,1528.8 1590.0,1529.5 1594.0,1529.0 1598.0,1529.2 1602.0,1531.2 1606.0,1530.2 1610.0,1531.1 1614.0,1529.7 1618.0,1531.0 1622.0,1529.9 1626.0,1529.4 1630.0,1530.7 1634.0,1531.2 1638.0,1529.0 1642.0,1530.2 1646.0,1530.3 1650.0,1529.3 1654.0,1529.7 1658.0,1529.1 1662.0,1529.2 1666.0,1529.4 1670.0,1530.3 1674.0,1530.4 1678.0,1529.2 1682.0,1528.7 1686.0,1529.6 1690.0,1530.5 1694.0,1529.2 1698.0,1529.5 1702.0,1529.2 1706.0,1530.8 1710.0,1530.1 1714.0,1528.9 1718.0,1529.0 1722.0,1529.7 1726.0,1530.1 1730.0,1530.4 1734.0,1528.9 1738.0,1529.1 1742.0,1530.5 1746.0,1529.8 1750.0,1529.4 1754.0,1529.5 1758.0,1531.2 1762.0,1529.5 1766.0,1530.2 1770.0,1529.6 1774.0,1529.8 1778.0,1530.9 1782.0,1531.3 1786.0,1529.6 1790.0,1529.2 1794.0,1530.6 1798.0,1529.2 1802.0,1528.7 1806.0,1531.0 1810.0,1530.0 1809.8,1526.0 1810.8,1522.0 1809.8,1518.0 1811.0,1514.0 1809.9,1510.0 1809.1,1506.0 1808.7,1502.0 1810.1,1498.0 1810.4,1494.0 1811.1,1490.0 1808.9,1486.0 1810.3,1482.0 1809.7,1478.0 1810.0,1474.0 1809.1,1470.0 1809.4,1466.0 1810.1,1462.0 1811.1,1458.0 1809.0,1454.0 1810.0,1450.0 1810.8,1446.0 1811.2,1442.0 1809.2,1438.0 1809.0,1434.0 1811.2,1430.0 1811.2,1426.0 1810.0,1422.0 1808.8,1418.0 1811.1,1414.0 1809.7,1410.0 1811.1,1406.0 1810.3,1402.0 1810.8,1398.0 1809.1,1394.0 1810.7,1390.0 1809.3,1386.0 1809.8,1382.0 1810.9,1378.0 1810.9,1374.0 1809.2,1370.0 1809.3,1366.0 1809.7,1362.0 1810.0,1358.0 1809.7,1354.0 1809.0,1350.0 1809.3,1346.0 1810.6,1342.0 1811.0,1338.0 1808.8,1334.0 1810.2,1330.0 1810.7,1326.0 1808.8,1322.0 1810.9,1318.0 1809.0,1314.0 1810.3,1310.0 1810.1,1306.0 1810.3,1302.0 1809.5,1298.0 1809.8,1294.0 1810.2,1290.0 1809.8,1286.0 1810.4,1282.0 1809.9,1278.0 1809.8,1274.0 1808.8,1270.0 1810.3,1266.0 1810.0,1262.0 1809.3,1258.0 1810.7,1254.0 1810.7,1250.0 1809.9,1246.0 1809.2,1242.0 1809.9,1238.0 1809.0,1234.0 1809.0,1230.0 1809.8,1226.0 1808.9,1222.0 1809.8,1218.0 1810.0,1214.0 1808.8,1210.0 1810.4,1206.0 1808.9,1202.0 1810.6,1198.0 1810.7,1194.0 1810.0,1190.0 1808.8,1186.0 1810.0,1182.0 1809.7,1178.0 1811.2,1174.0 1809.1,1170.0 1810.9,1166.0 1811.3,1162.0 1810.6,1158.0 1810.8,1154.0 1809.2,1150.0 1811.3,1146.0 1810.0,1142.0 1811.2,1138.0 1811.1,1134.0 1809.1,1130.0 1810.7,1126.0 1811.1,1122.0 1808.9,1118.0 1809.6,1114.0 1810.7,1110.0 1809.1,1106.0 1811.0,1102.0 1809.4,1098.0 1810.8,1094.0 1809.1,1090.0 1810.0,1086.0 1811.1,1082.0 1809.2,1078.0 1809.4,1074.0 1810.0,1070.0 1809.5,1066.0 1808.8,1062.0 1809.2,1058.0 1809.1,1054.0 1811.1,1050.0 1810.5,1046.0 1811.0,1042.0 1809.1,1038.0 1810.7,1034.0 1809.0,1030.0 1810.1,1026.0 1810.4,1022.0 1809.6,1018.0 1811.0,1014.0 1810.1,1010.0 1810.2,1006.0 1811.0,1002.0 1809.0,998.0 1811.3,994.0 1810.3,990.0 1809.7,986.0 1810.8,982.0 1809.4,978.0 1811.3,974.0 1810.2,970.0 1809.6,966.0 1810.7,962.0 1809.8,958.0 1809.2,954.0 1810.6,950.0 1808.8,946.0 1810.8,942.0 1809.4,938.0 1810.4,934.0 1811.3,930.0 1810.2,926.0 1810.4,922.0 1809.5,918.0 1808.7,914.0 1808.8,910.0 1809.1,906.0 1810.3,902.0 1809.8,898.0 1810.0,894.0 1811.0,890.0 1809.0,886.0 1809.3,882.0 1810.4,878.0 1808.8,874.0 1808.7,870.0 1809.6,866.0 1809.0,862.0 1809.6,858.0 1809.3,854.0 1810.2,850.0 1810.2,846.0 1809.2,842.0 1810.3,838.0 1809.9,834.0 1809.1,830.0 1811.1,826.0 1809.3,822.0 1809.1,818.0 1808.9,814.0 1810.4,810.0 1811.0,806.0 1810.7,802.0 1809.7,798.0 1809.4,794.0 1808.7,790.0 1810.4,786.0 1810.2,782.0 1809.6,778.0 1810.4,774.0 1809.9,770.0 1811.1,766.0 1810.6,762.0 1809.3,758.0 1811.0,754.0 1808.8,750.0 1810.1,746.0 1809.8,742.0 1809.3,738.0 1808.9,734.0 1810.7,730.0 1808.7,726.0 1810.1,722.0 1810.0,718.0 1815.2,718.5" fill="#d9f2e3" stroke="#6f7d7d" stroke-width="1.2"/>
<polygon points="692.7,1471.7 692.1,1476.2 694.7,1480.3 694.3,1484.8 692.5,1489.3 689.4,1493.0 687.9,1497.4 686.9,1502.0 685.4,1506.4 684.5,1511.0 681.2,1514.3 680.0,1519.1 677.1,1522.7 674.5,1526.5 671.5,1530.0 676.1,1528.8 680.8,1531.0 685.4,1530.7 690.0,1530.0 692.0,1525.9 691.6,1521.0 695.1,1517.4 696.3,1513.1 697.1,1508.5 699.2,1504.5 700.0,1500.0 698.8,1496.0 697.2,1492.1 695.9,1488.1 695.2,1484.0 693.6,1480.1 693.3,1475.8 692.7,1471.7" fill="#d9f2e3" stroke="#6f7d7d" stroke-width="1.2"/>
<polygon points="408.1,1486.0 412.5,1484.0 416.6,1481.3 420.4,1478.3 426.5,1475.2 431.0,1472.0 434.2,1467.5 439.7,1466.1 444.9,1463.7 449.7,1464.3 454.2,1466.0 457.2,1463.7 461.3,1462.6 465.4,1461.0 469.5,1459.9 473.5,1458.5 476.7,1455.8 480.3,1453.7 480.1,1458.4 478.7,1462.9 484.9,1459.9 486.4,1456.2 488.4,1452.5 487.6,1448.1 489.5,1444.5 493.0,1447.0 497.2,1447.6 501.8,1444.5 506.1,1444.9 509.4,1447.6 507.3,1443.2 506.4,1438.4 504.2,1434.0 503.9,1428.9 501.8,1424.5 506.9,1423.2 511.0,1419.9 515.6,1424.5 515.0,1429.2 515.6,1433.8 523.3,1433.8 525.3,1437.7 525.4,1442.3 527.9,1446.0 529.1,1450.6 529.4,1455.3 533.0,1453.1 537.1,1452.2 537.8,1447.5 536.7,1443.0 536.5,1438.4 535.6,1433.8 541.7,1433.0 544.8,1438.4 545.4,1443.1 545.6,1447.9 547.8,1452.2 551.9,1452.1 556.0,1453.1 560.1,1452.2 564.4,1456.4 569.3,1459.9 568.9,1464.1 570.5,1468.1 570.9,1472.2 575.5,1472.8 580.1,1472.2 586.2,1472.2 590.4,1470.8 594.2,1468.6 598.5,1467.5 602.4,1465.8 606.8,1465.8 610.8,1464.5 612.3,1456.8 607.0,1453.8 603.1,1449.1 606.9,1446.8 608.6,1442.3 612.3,1439.9 614.5,1444.8 615.4,1450.0 615.4,1455.3 623.1,1456.8 626.5,1459.4 630.8,1459.9 631.9,1464.4 632.3,1469.1 637.6,1467.4 643.1,1467.5 649.2,1467.5 649.4,1471.9 648.3,1476.0 646.1,1479.8 642.2,1482.0 638.8,1484.7 635.4,1487.5 633.4,1491.9 632.3,1496.7 630.2,1500.3 630.3,1504.8 627.5,1508.2 626.2,1512.1 625.4,1516.7 623.1,1520.8 621.9,1525.3 621.6,1530.0 617.5,1529.0 613.5,1531.1 609.4,1529.0 605.3,1528.9 601.3,1528.8 597.2,1531.0 593.1,1530.8 589.1,1531.0 585.0,1531.2 580.9,1529.1 576.9,1529.2 572.8,1529.7 568.7,1529.2 564.7,1529.7 560.6,1530.6 556.6,1531.0 552.5,1531.0 548.4,1529.3 544.4,1530.8 540.3,1530.5 536.2,1530.2 532.2,1531.2 528.1,1530.6 524.0,1530.6 520.0,1529.4 515.9,1530.3 511.8,1530.5 507.8,1528.8 503.7,1530.0 499.6,1529.1 495.6,1529.7 491.5,1531.2 487.4,1530.2 483.4,1530.2 479.3,1529.3 475.2,1530.4 471.2,1529.5 467.1,1529.9 463.0,1530.7 459.0,1529.1 454.9,1531.1 450.9,1529.2 446.8,1530.9 442.7,1531.3 438.7,1530.8 434.6,1529.3 430.5,1528.8 426.5,1531.3 422.4,1530.0 418.3,1530.0 414.3,1529.2 410.2,1530.8 406.1,1530.0 402.1,1530.4 398.0,1530.0 399.6,1525.9 398.8,1521.4 401.2,1517.4 400.2,1512.9 400.8,1508.6 402.7,1504.6 402.9,1500.2 402.6,1495.8 404.7,1491.8 405.0,1487.5 408.1,1486.0" fill="#d9f2e3" stroke="#6f7d7d" stroke-width="1.2"/>
<polygon points="1789.9,589.2 1792.4,585.1 1796.4,582.7 1801.6,582.7 1806.6,581.7 1811.6,580.5 1810.8,585.9 1811.6,591.3 1806.0,593.2 1800.7,595.7 1796.9,593.8 1793.4,591.5 1789.9,589.2" fill="#d9f2e3" stroke="#6f7d7d" stroke-width="1.2"/>
<polygon points="1787.7,630.4 1790.4,626.9 1794.3,624.5 1795.6,619.9 1800.0,618.0 1801.2,613.3 1805.1,610.8 1811.6,615.2 1812.3,620.2 1812.2,625.3 1811.6,630.4 1806.8,629.3 1802.0,630.4 1797.3,630.7 1792.5,629.4 1787.7,630.4" fill="#d9f2e3" stroke="#6f7d7d" stroke-width="1.2"/>
<polygon points="1797.5,649.9 1801.0,647.6 1805.1,646.6 1811.6,647.7 1811.6,655.3 1807.2,654.9 1802.9,654.2 1797.5,649.9" fill="#d9f2e3" stroke="#6f7d7d" stroke-width="1.2"/>
<polygon points="1812.0,1052.0 1807.9,1053.9 1803.5,1055.4 1799.4,1057.4 1795.6,1060.0 1792.6,1063.8 1790.5,1068.3 1787.5,1072.1 1783.2,1073.9 1779.0,1075.7 1774.1,1075.3 1769.8,1077.1 1765.4,1078.2 1761.2,1080.2 1758.1,1083.7 1754.0,1086.0 1749.8,1088.2 1746.5,1091.4 1743.0,1094.4 1742.4,1099.3 1740.0,1103.5 1737.5,1107.7 1736.9,1112.6 1734.3,1115.8 1731.3,1118.6 1728.1,1121.1 1724.3,1123.0 1721.1,1125.4 1718.6,1128.8 1717.8,1133.2 1716.2,1137.2 1714.3,1141.2 1712.5,1145.1 1710.5,1149.0 1707.6,1152.6 1705.6,1156.9 1702.4,1160.3 1699.9,1164.1 1696.4,1167.3 1693.5,1170.9 1692.4,1175.2 1692.1,1179.8 1688.3,1183.0 1688.6,1187.9 1686.2,1191.7 1684.2,1195.6 1680.6,1198.7 1678.4,1202.9 1676.0,1206.8 1674.1,1211.0 1672.0,1215.2 1668.8,1218.6 1667.4,1222.9 1667.6,1227.6 1666.3,1231.8 1664.8,1236.1 1664.6,1240.6 1662.3,1244.7 1662.6,1249.2 1661.6,1253.8 1661.8,1258.3 1662.3,1262.9 1662.3,1267.4 1660.7,1271.2 1659.8,1275.3 1659.3,1279.4 1656.8,1283.0 1655.8,1286.9 1656.7,1291.5 1656.5,1296.1 1656.7,1300.8 1658.6,1305.1 1659.1,1309.7 1660.8,1313.7 1662.4,1317.8 1665.1,1321.3 1667.5,1325.0 1668.8,1329.2 1669.6,1333.3 1670.5,1337.4 1672.0,1341.2 1673.5,1345.0 1675.3,1348.8 1677.9,1352.7 1681.5,1355.6 1684.8,1358.8 1688.3,1361.8 1691.7,1364.3 1695.1,1366.6 1697.9,1369.8 1702.0,1371.4 1704.6,1374.8 1706.9,1378.5 1708.3,1382.7 1710.6,1386.4 1713.0,1390.1 1716.0,1393.4 1717.6,1397.6 1718.5,1402.1 1719.0,1406.6 1719.3,1411.3 1720.4,1415.7 1720.9,1420.3 1725.3,1419.7 1729.8,1419.2 1733.9,1417.1 1733.5,1412.5 1735.1,1408.2 1735.8,1403.7 1735.2,1399.2 1735.9,1394.7 1737.5,1390.3 1735.5,1385.7 1737.1,1381.3 1738.2,1377.4 1738.2,1373.3 1740.8,1369.8 1742.1,1365.9 1742.1,1361.8 1742.0,1357.6 1744.1,1354.0 1745.0,1350.1 1746.5,1346.3 1746.9,1342.2 1749.6,1338.5 1752.6,1334.9 1755.7,1331.4 1757.8,1327.1 1760.3,1323.1 1763.2,1319.5 1766.6,1316.5 1767.4,1311.7 1770.9,1308.8 1772.7,1304.7 1775.9,1301.6 1777.0,1297.0 1781.3,1294.6 1782.7,1290.2 1783.9,1285.7 1784.8,1281.1 1787.0,1277.0 1788.9,1272.8 1789.6,1268.1 1792.4,1264.2 1793.2,1259.9 1794.1,1255.8 1795.7,1251.7 1795.8,1247.4 1796.5,1243.1 1797.3,1238.9 1798.9,1234.9 1800.9,1230.9 1802.8,1226.9 1803.2,1222.4 1803.8,1217.9 1806.7,1214.2 1807.0,1209.7 1808.7,1205.6 1809.6,1201.3 1811.1,1197.1 1814.2,1193.7 1815.2,1189.4 1814.4,1184.4 1812.0,1180.0 1812.3,1176.0 1811.9,1172.0 1812.2,1168.0 1811.3,1164.0 1813.2,1160.0 1811.6,1156.0 1812.4,1152.0 1812.8,1148.0 1812.8,1144.0 1811.9,1140.0 1811.5,1136.0 1812.1,1132.0 1811.0,1128.0 1812.9,1124.0 1811.6,1120.0 1812.9,1116.0 1811.4,1112.0 1811.7,1108.0 1811.4,1104.0 1811.8,1100.0 1811.2,1096.0 1810.7,1092.0 1812.6,1088.0 1811.4,1084.0 1811.3,1080.0 1811.5,1076.0 1811.9,1072.0 1811.8,1068.0 1812.4,1064.0 1812.4,1060.0 1811.6,1056.0 1812.0,1052.0" fill="#cfc57e" stroke="#6f7d7d" stroke-width="1.2"/>
<polygon points="1768.2,321.0 1772.4,319.8 1775.9,317.4 1779.0,314.5 1783.5,315.0 1786.9,318.5 1790.8,320.3 1795.0,321.6 1799.7,321.7 1803.1,325.0 1807.4,326.2 1811.6,327.5 1812.8,331.8 1812.8,336.1 1810.4,340.5 1811.2,344.8 1812.2,349.2 1811.6,353.5 1807.4,352.0 1803.8,349.6 1800.3,347.0 1797.5,343.5 1793.3,342.1 1789.9,339.4 1785.9,338.0 1783.5,334.2 1779.9,332.2 1775.5,331.5 1772.5,328.6 1771.2,324.3 1768.2,321.0" fill="#cfc57e" stroke="#6f7d7d" stroke-width="1.2"/>
<polygon points="1619.0,1030.0 1621.6,1026.1 1624.3,1022.4 1626.0,1018.0 1632.0,1022.0 1630.9,1025.9 1629.7,1029.8 1630.0,1034.0 1634.0,1040.0 1629.3,1040.8 1625.0,1043.0 1623.8,1038.3 1620.3,1034.7 1619.0,1030.0" fill="#cfc57e" stroke="#6f7d7d" stroke-width="1.2"/>
<polygon points="1593.0,1062.0 1598.0,1062.0 1603.0,1061.0 1605.0,1068.0 1601.0,1068.9 1597.0,1070.0 1595.6,1065.7 1593.0,1062.0" fill="#cfc57e" stroke="#6f7d7d" stroke-width="1.2"/>
<polygon points="1594.0,1247.0 1596.9,1243.4 1600.0,1240.0 1604.0,1246.0 1608.2,1246.0 1612.0,1244.0 1616.0,1247.0 1611.0,1248.4 1606.0,1250.0 1601.9,1249.6 1597.8,1248.7 1594.0,1247.0" fill="#cfc57e" stroke="#6f7d7d" stroke-width="1.2"/>
<polygon points="907.0,1453.0 912.0,1447.0 918.0,1445.0 918.0,1450.0 912.0,1455.0 907.0,1453.0" fill="#cfc57e" stroke="#6f7d7d" stroke-width="1.2"/>
<polygon points="927.0,1444.0 930.4,1439.8 935.0,1437.0 940.0,1439.0 937.0,1443.0 934.0,1447.0 934.1,1452.7 932.0,1458.0 929.0,1455.0 927.9,1449.5 927.0,1444.0" fill="#cfc57e" stroke="#6f7d7d" stroke-width="1.2"/>
<polygon points="836.0,1455.5 839.7,1453.3 844.0,1452.7 848.0,1451.4 852.0,1450.0 852.0,1455.0 847.3,1456.2 842.4,1456.8 838.0,1459.0 836.0,1455.5" fill="#cfc57e" stroke="#6f7d7d" stroke-width="1.2"/>
<polygon points="1383.2,1243.5 1388.0,1242.2 1392.7,1243.5 1395.9,1239.5 1397.4,1234.7 1400.0,1230.5 1402.2,1226.0 1397.5,1225.0 1392.8,1224.1 1388.0,1224.4 1386.3,1230.8 1385.6,1235.1 1384.4,1239.3 1383.2,1243.5" fill="#cfc57e" stroke="#6f7d7d" stroke-width="1.2"/>
<polygon points="1346.7,1257.8 1351.3,1258.2 1355.2,1255.1 1359.8,1255.8 1364.1,1254.6 1362.5,1261.0 1357.8,1260.6 1353.0,1261.0 1346.7,1257.8" fill="#cfc57e" stroke="#6f7d7d" stroke-width="1.2"/>
<polygon points="1476.9,1145.4 1481.2,1141.9 1486.6,1140.6 1491.4,1144.0 1496.4,1147.1 1491.3,1149.9 1486.6,1153.6 1484.1,1150.0 1479.9,1148.5 1476.9,1145.4" fill="#cfc57e" stroke="#6f7d7d" stroke-width="1.2"/>
<polygon points="1603.8,1243.0 1608.8,1243.5 1613.5,1241.4 1610.3,1247.9 1607.0,1245.4 1603.8,1243.0" fill="#cfc57e" stroke="#6f7d7d" stroke-width="1.2"/>
<polygon points="1759.9,733.1 1764.2,733.1 1768.6,734.2 1772.9,733.1 1774.1,737.5 1772.3,741.8 1772.9,746.1 1767.9,747.5 1763.2,749.4 1761.9,745.4 1762.5,741.1 1760.4,737.3 1759.9,733.1" fill="#cfc57e" stroke="#6f7d7d" stroke-width="1.2"/>
<g fill="none" stroke="#1a1a1a" stroke-width="1.3" stroke-linejoin="round">
<polyline points="748.7,142.0 751.9,145.6 754.9,149.2 757.5,153.2 761.8,155.7 764.4,159.7 767.5,163.2 770.4,167.0 772.9,171.0 777.1,173.6 779.1,178.1 782.9,181.1 788.3,182.5 793.5,184.4 799.0,185.4 804.1,187.6 805.3,192.2 805.4,197.1 807.5,201.4 808.5,206.0 810.6,210.4 804.1,210.4 803.3,215.4 802.1,220.2 800.9,225.1 799.2,229.9 794.9,227.9 790.6,225.9 786.5,223.7 781.3,223.8 777.7,220.3 773.6,218.0 768.9,217.1 764.0,216.6 760.1,213.6 756.4,208.2 753.6,202.2 748.7,202.3 744.3,200.5 740.3,197.2 735.5,196.7 730.9,195.7 727.6,200.6 723.0,199.5 718.4,198.4 713.8,197.4 709.1,197.5 704.4,196.8 699.8,196.1 695.1,195.7 690.4,198.0 686.3,200.9 682.1,203.9 676.8,201.7 671.0,201.4 665.8,199.0 661.4,196.9 656.6,195.8 652.4,193.4 647.2,193.5 643.0,190.8 637.9,190.4 632.9,189.5 628.4,186.9 623.3,187.3 618.4,188.0 613.6,189.8 608.9,191.6 603.8,191.5 599.1,193.4 595.2,196.8 592.5,201.0 589.9,205.4 586.1,208.7 581.0,207.6 576.3,205.7 571.5,203.9 567.7,207.9 563.4,211.3 559.0,214.5 555.2,218.5 549.8,219.6 545.9,224.0 540.5,225.0 534.0,223.4 532.2,228.2 530.8,233.1 525.6,236.8 519.4,238.0 514.2,237.4 509.9,233.9 504.8,233.1 502.2,228.2 500.4,222.8 496.6,218.5 499.9,212.0 493.4,208.7 488.9,205.1 483.8,202.2 480.4,197.4 480.6,191.4 481.7,185.4 482.0,179.5"/>
<polyline points="799.2,229.9 801.6,234.0 804.7,237.3 809.0,239.6 812.4,242.7 816.2,245.4 818.7,249.4 819.6,254.1 822.1,258.3 823.5,262.8 825.2,267.2 825.2,272.2 829.5,274.9 831.3,279.8 835.7,282.5 838.2,286.8 842.8,289.2 848.2,287.9 852.6,291.1 858.0,290.1 862.9,290.9 867.5,293.3 869.4,299.3 872.4,304.7 873.9,311.1 874.0,317.7 877.7,321.5 882.7,323.5 887.0,326.5 890.3,330.7 891.6,335.9 893.8,340.7 895.4,345.8 898.4,350.2 897.1,355.4 898.2,360.8 896.1,365.8 895.2,371.0 895.1,376.3 898.9,379.0 901.7,382.9 906.5,384.3 909.8,387.7 907.9,392.1 908.1,396.8 909.5,401.6 909.0,406.3 906.6,410.7 906.5,415.3 909.1,419.9 913.9,422.7 916.7,427.2 919.5,431.6 917.7,435.9 918.0,440.8 914.9,444.7 914.7,449.5 917.4,454.3 921.2,458.6 922.8,464.1 927.7,464.6 932.5,465.9 937.5,466.4 942.3,467.4 946.7,469.8 951.8,470.4 955.6,474.0 960.7,474.8 965.1,477.1 969.9,478.4 974.8,479.3 979.8,479.7 984.7,480.5 989.3,482.6 994.1,483.9 999.2,483.6 1003.3,480.5 1006.3,476.3 1009.3,472.1 1012.3,467.9 1017.6,465.9 1020.6,461.7 1023.6,457.6 1029.6,456.9 1035.0,454.3 1040.6,453.1 1046.4,452.7 1051.1,456.2 1056.2,459.2 1060.6,460.9 1065.2,460.8 1069.8,460.5 1074.4,460.0 1078.9,460.9"/>
<polyline points="1078.9,464.1 1077.5,469.1 1075.7,473.9 1071.6,476.9 1069.4,481.5 1065.5,484.7 1062.5,488.6 1058.6,491.7 1055.5,495.6 1052.9,499.9 1046.6,502.1 1039.9,503.1 1044.4,505.4 1047.5,509.2 1050.8,512.7 1054.1,516.3 1057.8,519.4 1053.3,520.4 1049.0,522.0 1045.8,526.0 1040.8,525.8 1036.7,527.6 1032.4,529.3 1028.6,531.9 1024.8,534.5 1020.4,535.7 1016.4,538.4 1013.3,542.0 1010.2,545.6 1006.5,548.6 1004.4,553.1 1001.7,557.1 997.5,559.6 993.8,562.6 991.7,567.2 987.3,569.5 983.7,572.6 981.9,577.4 977.9,580.1 974.5,583.4 971.7,587.3 968.9,591.2 965.6,594.5 961.8,597.5"/>
<polyline points="369.8,561.7 374.5,563.2 379.5,563.3 385.2,562.5 390.3,560.0 395.8,558.4 397.2,553.8 401.4,550.8 403.8,546.6 405.5,542.2 410.5,542.0 415.3,543.5 420.2,543.8 425.0,541.8 429.3,538.8 432.9,535.1 437.1,532.0 441.3,529.2 442.7,523.8 442.6,518.2 444.6,512.9 447.2,508.2 450.4,503.9 454.8,500.6 457.3,495.8 460.8,491.8 464.9,488.3 468.5,484.4 472.6,481.1 475.8,476.7 480.4,473.9 481.6,469.1 486.2,466.2 487.0,461.1 488.7,456.6 492.3,453.1 495.0,449.2 496.6,444.6 496.5,438.0 498.3,431.6 502.9,429.0 507.0,425.5 511.7,423.1 516.1,420.2 520.7,418.8 525.3,418.9 529.8,421.6 534.4,421.2 538.9,420.2 543.8,419.7 548.7,419.4 553.5,418.1 558.5,419.0 563.3,417.5 568.3,418.5 573.2,417.5 578.0,417.2 583.0,417.1 587.7,415.3 592.4,413.0 597.1,410.8 602.1,409.6 607.2,408.8 612.9,409.6 618.4,410.9 623.5,413.7 627.2,410.1 632.3,408.8 636.5,406.2 642.4,407.6 648.4,406.7 654.4,407.2 659.2,408.9 664.1,409.3 669.2,407.4 673.9,409.3 678.8,409.2 683.8,408.9 688.6,410.4 693.1,411.9 697.7,410.1 702.2,411.2 706.8,411.6 711.3,411.4 715.2,414.3 719.8,415.3 724.5,416.3 728.7,418.2 733.4,419.2 737.4,421.8 740.6,425.2 744.5,427.6 749.5,428.0 753.6,429.8 756.9,433.2 761.6,433.8 766.1,435.4 770.2,438.2 774.8,439.5 779.7,439.7 781.5,444.4 785.9,447.5 786.8,452.8 789.6,456.9 792.7,460.9 794.1,465.3 795.1,469.9 799.3,473.2 800.9,477.5 801.2,482.5 802.5,487.0 805.0,490.9 807.3,495.0 811.2,491.3 815.9,488.7 820.4,485.8 823.5,481.1 828.4,478.7 834.0,479.3 839.4,480.2 844.7,482.0 848.7,484.5 851.3,488.5 855.1,491.1 857.7,495.0 862.6,494.3 867.5,494.0 872.4,495.5 877.2,495.0 877.9,499.8 875.3,504.0 876.1,508.8 875.9,513.4 874.0,517.8 877.7,521.1 882.8,521.7 886.1,525.7 890.4,527.8 895.1,529.2 893.3,533.6 894.5,538.6 892.8,543.0 893.0,547.8 889.9,552.0 890.3,556.8 895.0,556.8 899.4,555.2 903.9,553.8 908.4,552.5 913.0,551.9 917.6,554.4 922.8,555.1 927.6,557.2 932.5,558.4 938.0,557.4 943.4,557.7 948.8,558.4 949.5,563.2 947.1,567.6 947.0,572.3 947.6,577.0 945.1,581.4 945.6,586.1 951.2,587.1 956.5,589.1 961.8,591.0"/>
<polyline points="395.8,558.4 396.7,565.0 395.8,571.5 398.8,575.2 399.8,580.1 403.5,583.4 405.5,587.7"/>
<polyline points="1025.3,247.8 1030.4,248.5 1035.0,251.0 1039.9,252.7 1043.2,256.0 1044.7,260.7 1049.3,263.0 1051.3,267.3 1055.0,263.8 1055.4,258.2 1060.0,255.2 1062.1,250.6 1064.3,246.1 1070.0,247.6 1075.2,250.4 1080.6,252.7 1084.1,255.5 1087.3,258.7 1090.0,262.4"/>
<polyline points="978.1,99.8 983.7,100.0 989.0,101.6 994.4,103.0 999.4,104.0 1004.2,103.6 1009.1,103.0 1013.9,101.4 1020.4,106.3 1025.3,106.1 1029.8,107.5 1034.1,110.1 1039.2,108.8 1043.5,111.5 1048.4,111.3 1052.9,112.8 1057.6,111.9 1060.4,107.5 1065.5,107.4 1069.2,104.6 1074.5,102.6 1079.7,100.4 1085.4,99.8"/>
<polyline points="1086.5,99.8 1092.0,99.7 1096.7,103.3 1102.1,103.7 1107.5,104.1 1112.5,106.3 1117.0,108.5 1120.6,112.2 1125.9,112.9 1129.8,116.2 1134.7,117.6 1138.6,120.9 1143.2,122.7 1146.5,126.7 1150.8,129.1 1155.7,130.4 1160.1,132.7 1164.3,135.3 1167.8,138.8 1172.0,141.5 1176.5,143.7 1181.2,145.6 1185.6,147.8 1189.4,151.3 1193.9,153.4 1199.1,156.1 1204.4,158.6 1210.1,159.9 1213.2,163.4 1217.2,165.9 1220.7,168.8 1222.7,173.4 1226.4,176.2 1229.9,180.5 1232.4,185.5 1237.2,188.9 1239.4,194.1 1243.4,196.8 1248.3,197.5 1252.0,200.7 1256.3,202.6 1261.1,203.6 1265.4,205.5 1271.1,207.6 1275.2,212.0 1275.7,218.0 1278.4,223.4 1281.7,226.6 1284.2,230.6 1288.2,233.1 1293.8,234.1 1299.3,235.5 1304.5,238.0 1309.5,235.5 1313.2,231.2 1317.3,227.5 1322.4,225.0 1322.0,218.5 1322.4,212.0 1327.1,214.9 1332.8,216.2 1337.0,220.1 1341.9,219.0 1346.7,217.5 1351.6,216.5 1356.5,215.2 1357.6,210.0 1361.1,205.7 1363.4,200.9 1364.6,195.7 1368.0,191.3 1369.5,186.0 1374.4,184.9 1379.4,185.5 1384.1,184.0 1389.1,184.5 1393.8,182.0 1398.8,182.7 1403.9,185.3 1409.3,187.2 1415.1,187.6 1418.3,183.9 1421.6,180.3 1424.9,176.7 1428.1,173.0 1433.8,172.2 1439.5,171.3 1439.0,165.4 1441.1,159.9 1445.9,160.7 1450.2,158.1 1454.8,157.4 1459.4,156.7 1464.1,156.5 1468.7,156.7 1468.7,162.1 1471.7,167.1 1472.3,172.4 1472.0,177.8 1477.5,180.8 1483.4,182.7 1487.4,180.3 1491.6,178.2 1496.4,177.8 1498.0,173.4 1499.2,168.8 1500.4,164.2 1502.1,159.8 1502.9,155.1 1507.3,151.6 1512.7,150.2 1514.2,155.2 1517.0,159.4 1521.1,163.0 1522.4,168.1 1528.1,168.1 1533.3,170.2 1538.7,171.3 1543.2,171.7 1547.8,171.4 1552.4,171.2 1556.9,172.4 1561.5,173.0 1562.7,168.2 1566.0,164.4 1568.0,159.9 1571.9,163.0 1577.1,163.4 1581.0,166.4 1580.4,171.1 1579.5,175.7 1580.7,180.6 1578.4,185.1 1577.7,189.7 1578.9,194.5 1578.4,199.2 1577.7,203.9 1578.5,209.0 1580.9,213.6 1582.6,218.5 1586.8,220.7 1590.7,223.4 1591.2,228.4 1593.3,232.9 1596.0,237.2 1597.9,241.7 1599.3,246.5 1600.7,251.2 1602.1,255.9 1607.6,258.1 1613.5,257.5"/>
<polyline points="1080.0,252.7 1083.8,256.6 1088.0,260.1 1093.0,262.4 1097.7,263.4 1102.4,263.7 1107.2,261.6 1111.9,263.1 1116.6,264.4 1121.4,264.5 1126.2,262.7 1130.9,263.4 1135.6,264.1 1140.3,263.5 1145.1,264.0 1149.7,262.2 1153.7,259.0 1158.7,258.0 1163.3,256.2 1167.8,254.3 1172.0,251.7 1176.7,250.7 1181.9,251.6 1186.3,249.8 1190.6,247.8 1195.4,249.4 1200.3,249.0 1205.2,249.9 1210.1,249.4 1214.6,247.3 1218.4,244.3 1220.7,239.4 1225.6,237.8 1228.7,234.0 1232.9,231.5 1238.5,230.4 1243.6,227.6 1249.2,226.6 1253.4,230.0 1257.1,234.1 1262.2,236.4 1265.2,240.7 1268.7,244.5 1273.2,240.7 1278.4,238.0 1283.8,239.7 1289.3,241.1 1294.7,242.9 1300.2,241.6 1304.5,238.0"/>
<polyline points="1524.1,285.2 1526.8,280.0 1530.6,275.4 1535.3,273.6 1540.4,273.2 1544.9,270.5 1550.1,270.5 1555.0,268.9 1559.5,271.4 1564.7,271.4 1569.8,272.0 1574.5,273.8 1579.3,272.5 1584.3,271.5 1588.9,269.2 1594.0,268.9 1599.7,269.5 1605.1,271.2 1610.3,273.8"/>
<polyline points="1515.9,291.7 1512.7,298.2 1510.3,302.3 1507.3,305.8 1504.8,309.7 1502.1,313.5 1499.6,317.5 1495.8,320.4 1493.1,324.2 1490.8,328.6 1490.1,333.4 1488.8,338.1 1487.2,342.7 1487.0,347.7 1484.2,351.9 1483.4,356.8 1481.9,361.1 1480.0,365.4 1478.5,369.8 1481.8,376.3 1477.3,377.4 1473.0,379.1 1468.7,381.0 1464.3,382.5 1459.9,384.0 1455.3,384.6 1450.9,386.0 1450.1,391.5 1448.5,396.8 1447.6,402.3 1442.1,401.1 1437.8,397.4 1433.1,400.2 1428.1,402.3 1425.9,406.9 1426.5,412.2 1424.4,416.9 1423.5,421.8 1422.9,426.8 1419.8,431.3 1420.0,436.5 1415.4,438.5 1410.3,438.7 1406.1,441.8 1401.4,443.5 1396.1,442.8 1391.7,445.4 1387.3,447.9 1382.3,448.5 1377.5,449.8 1372.8,451.1 1372.1,457.1 1373.9,463.0 1372.8,469.0 1368.4,471.1 1363.1,470.5 1358.6,472.5 1354.5,475.5 1349.7,476.4 1345.0,477.7 1340.2,478.7 1339.8,483.6 1339.9,488.5 1340.2,493.4 1337.4,497.6 1335.5,502.1 1334.3,507.0 1331.8,511.3 1330.5,516.2 1326.4,518.7 1322.7,521.7 1319.6,525.4 1315.3,527.7 1311.8,531.0 1307.8,533.6 1305.5,538.3 1301.2,540.6 1296.5,541.5 1293.1,545.6 1287.9,545.6 1283.8,547.9 1279.5,550.1 1275.2,551.9 1270.5,551.5 1266.2,553.4 1261.8,554.6 1257.2,554.4 1252.6,555.0 1248.3,556.5 1243.9,558.0 1239.4,558.4 1234.7,556.9 1230.0,555.3 1225.5,553.0 1220.4,552.5 1215.8,550.6 1211.3,548.5 1206.4,547.4 1201.6,545.9 1197.1,543.8 1194.6,537.7 1190.6,532.4 1188.7,528.1 1185.2,524.8 1182.3,521.1 1179.0,517.8 1176.6,513.8 1174.3,509.7 1169.8,508.1 1166.3,504.6 1162.3,502.1 1158.1,499.9 1156.9,494.2 1158.1,488.5 1154.0,485.2 1148.7,484.4 1144.8,480.8 1140.3,478.6 1135.3,477.1 1136.0,471.0 1133.4,465.3 1133.7,459.2 1128.7,458.0 1124.2,455.3 1118.7,456.4 1113.8,454.9 1109.3,452.1 1104.4,450.9 1099.5,449.5 1094.4,452.4 1090.3,456.5 1086.5,460.9"/>
<polyline points="1444.3,356.8 1447.5,360.1 1450.9,363.3 1455.5,365.6 1460.6,365.3 1465.5,366.2 1470.3,367.7 1475.3,368.1"/>
<polyline points="1271.9,555.2 1270.9,560.5 1269.7,565.7 1267.8,570.7 1267.1,576.1 1265.4,581.2 1261.9,584.6 1260.1,589.1 1258.0,593.4 1255.7,597.5 1254.0,600.1"/>
<polyline points="1428.1,560.1 1433.2,560.2 1437.9,562.2 1442.8,563.5 1447.6,565.1 1452.4,566.4 1457.1,568.4 1461.9,569.9 1467.1,569.8 1471.3,567.2 1475.5,564.5 1480.0,562.3 1484.8,560.6 1488.3,556.8 1493.3,558.6 1498.0,561.2 1502.9,563.3 1507.5,564.4 1512.2,562.9 1516.9,563.5 1521.4,565.6 1526.1,565.4 1530.8,564.8 1535.4,565.0 1540.5,567.9 1543.4,573.4 1548.4,576.3 1552.6,578.7 1556.8,581.0 1560.9,583.3 1565.4,584.9 1570.2,585.6 1574.5,587.7 1579.0,585.2 1584.0,583.9 1589.1,582.9 1594.0,581.2 1598.6,578.8 1603.8,578.0 1604.5,573.3 1607.3,569.4 1608.9,565.1 1609.9,560.5 1613.2,556.8 1613.5,551.9 1617.4,549.0 1619.9,544.5 1624.2,542.0 1628.5,539.5 1631.2,535.3 1635.6,532.8 1637.9,528.1 1642.1,525.5 1646.0,522.7 1651.8,521.4 1657.0,518.6 1662.3,516.2 1665.4,511.5 1667.0,506.0 1670.4,501.5"/>
<polyline points="1560.0,270.0 1565.1,271.4 1570.1,273.0 1575.2,274.3 1580.4,271.6 1586.0,270.0 1591.8,270.8 1597.6,270.8 1603.4,271.1 1611.0,274.3"/>
<polyline points="1707.5,398.0 1711.8,393.6 1716.8,392.7 1720.6,389.5 1724.8,387.1 1727.9,383.2 1731.3,379.5 1736.4,376.9 1742.2,376.3 1746.9,377.2 1750.6,380.6 1755.2,381.7 1761.2,381.7 1767.0,382.8 1772.5,384.9 1779.2,385.1 1785.5,387.1"/>
<polyline points="1797.5,369.8 1800.1,374.1 1802.9,378.4"/>
<polyline points="407.2,590.0 411.2,593.2 416.0,595.2 420.2,598.1 425.1,599.8 430.5,601.4 435.5,604.0 439.7,607.9 445.0,604.8 449.5,600.4 455.4,599.9 461.4,601.0 467.4,600.4 469.9,604.9 472.5,609.3 473.9,614.4 478.1,618.3 482.3,622.3 485.2,627.4 484.5,632.8 485.8,638.0 486.9,643.2 486.9,648.6 488.6,653.9 490.4,659.3 491.8,664.8 492.2,670.7 490.1,676.2 493.4,681.1 497.3,684.0 502.0,685.2 506.4,686.9 502.9,690.1 501.7,694.7 498.8,698.2 496.6,702.2 493.3,706.5 489.9,710.7 485.2,713.6 482.5,717.5 481.1,721.9 480.4,726.6 479.9,731.3 477.3,735.5 476.6,740.1 477.0,745.0 475.5,749.4 477.7,755.2 480.4,760.8 478.5,766.6 479.3,772.7 478.7,778.7 473.8,779.1 470.0,782.6 465.4,783.9 460.8,785.2 457.2,788.0 454.9,792.2 451.5,795.3 447.1,797.5 444.6,801.5 440.3,804.7 435.4,807.3 431.6,811.2 429.3,815.3 426.6,819.1 423.3,822.4 420.2,825.9 414.9,823.9 411.1,819.3 405.5,817.7 402.7,821.8 398.9,824.9 396.6,829.4 392.5,832.4 388.2,834.4 384.0,837.0 379.5,838.9 374.6,839.1 369.8,838.9"/>
<polyline points="654.4,851.9 655.6,847.1 658.0,842.9 662.0,839.6 663.1,834.8 665.8,830.7 667.9,826.5 670.5,822.6 673.4,819.0 676.0,815.1 678.3,811.0 682.1,808.0 683.3,802.3 683.7,796.6 686.0,792.5 688.3,788.4 691.8,785.2 693.2,779.6 693.4,773.8 689.3,770.4 686.9,765.7 680.4,760.8 676.3,758.0 673.7,753.6 668.8,751.8 665.8,747.8 667.7,743.2 670.7,739.2 672.7,734.7 673.9,729.9 675.8,725.7 678.9,722.3 682.4,719.3 684.2,715.0 688.2,712.3 689.1,707.4 693.5,705.0 695.1,700.6 697.5,696.1 699.3,691.3 702.3,687.1 704.8,682.7 710.0,680.6 715.8,681.1 721.1,679.5 725.2,675.7 730.7,673.9 734.7,669.9 739.0,666.4 743.8,665.5 748.7,664.7 753.6,664.8 759.4,662.7 765.0,659.9 770.4,663.4 774.8,668.1 779.3,670.7 784.5,671.3 787.9,667.3 792.7,664.9 796.8,661.7 800.8,658.3 802.7,653.1 806.4,648.9 807.8,643.5 810.6,638.8 818.7,640.4 822.8,643.0 827.3,644.9 831.7,646.9 836.5,645.6 841.4,645.0 846.2,643.3 851.2,643.7 854.5,648.6 859.6,649.3 863.9,652.7 869.3,653.0 873.8,655.5 879.2,655.7 883.8,658.3 888.0,660.1 892.6,661.2 896.8,663.2 902.2,661.0 907.4,658.3 913.0,656.7 919.5,655.5 926.0,656.7 929.8,653.8 933.8,651.2 937.7,648.5 942.3,646.9 946.0,643.7 948.4,639.2 951.9,635.8 955.3,632.3 955.6,627.2 953.7,622.5 955.7,617.8 957.2,613.0 958.3,608.1 958.6,603.0 959.8,598.2 962.4,594.1 965.1,590.0"/>
<polyline points="955.3,632.3 951.7,636.1 946.4,637.3 942.3,640.4 941.9,645.6 942.7,650.8 942.6,656.0 941.9,661.2 942.3,666.4 935.8,668.1 932.1,672.6 929.9,678.2 926.0,682.7 932.5,687.6 931.0,692.4 931.9,697.4 930.9,702.2 933.6,706.4 937.5,709.5 940.6,713.3 941.7,718.5 945.6,721.8 947.4,727.7 950.4,733.1 948.2,738.7 947.2,744.5 948.5,750.2 947.2,755.9 952.1,760.8 949.9,766.4 946.3,771.1 942.3,775.4 945.6,778.7 950.1,775.5 955.3,773.8 960.3,774.1 965.1,775.4 965.4,780.5 966.4,785.7 965.6,790.8 964.7,795.9 966.0,801.0 964.1,806.1 965.1,811.2 961.1,814.9 957.1,818.4 953.7,822.6 949.3,820.7 945.6,817.7 946.1,822.6 945.9,827.5 947.2,832.3 947.2,837.2 945.7,842.3 941.0,845.4 939.1,850.2 934.3,852.9 930.7,857.2 926.0,860.0 923.7,864.2 919.5,866.5 917.5,871.2 917.1,876.2 916.3,881.2 919.5,884.4 913.0,889.3 917.2,891.6 919.5,895.8 918.6,902.5 916.3,908.8 912.2,911.5 907.1,911.3 903.1,914.4 898.4,915.3 893.4,914.7 888.6,915.7 883.8,916.9 881.4,921.7 877.2,925.1 872.4,918.6 866.5,920.5 861.0,923.4 856.2,926.2 851.2,928.3 847.9,923.5 844.3,919.0 839.8,915.3 834.1,915.1 828.4,913.7 824.9,918.3 819.0,920.3 815.4,925.1 815.2,930.0 813.4,934.7 813.7,939.7 813.8,944.6 809.0,943.4 804.2,942.6 799.2,943.0 794.4,941.8 789.4,941.3 786.3,944.7 783.8,948.7 779.7,951.1 777.5,956.2 776.6,961.7 774.7,966.9 773.1,972.2 769.0,975.3 767.4,980.5 763.4,983.6 758.5,985.9 755.1,990.4 749.7,991.7 745.5,995.0 741.3,997.6 738.8,1002.0 734.7,1004.7 730.3,1007.1 727.6,1011.3 725.6,1016.6 724.2,1022.1 722.7,1027.5 720.0,1032.0 716.2,1035.7"/>
<polyline points="654.4,851.9 649.4,852.6 644.6,851.2 639.8,850.2 633.3,847.0 630.0,851.9 625.1,852.1 620.2,851.9 620.2,848.6 617.0,851.9 612.4,854.7 607.4,856.4 602.7,858.9 597.5,860.0 600.7,861.6 600.2,866.5 600.3,871.4 600.7,876.3 598.1,881.6 594.2,886.0 591.5,889.8 587.7,892.5 582.0,894.9 576.3,897.4 574.9,902.3 573.1,907.2 567.1,907.6 561.7,910.4 555.2,908.8 549.7,912.4 543.8,915.3 537.9,913.4 532.4,910.4 529.2,902.3 524.7,904.7 522.2,909.6 517.8,912.1 515.5,907.9 512.9,903.9 508.6,902.3 505.2,899.1 500.8,897.7 496.6,895.8 495.0,887.7 486.9,884.4 481.1,884.5 475.5,886.0 472.1,889.7 467.4,891.5 463.6,894.6 459.9,897.8 456.0,900.7 453.6,906.2 452.7,912.1 447.5,913.4 443.4,917.4 438.1,918.6 438.1,923.5 437.4,928.4 436.4,933.2 434.5,938.5 432.1,943.6 428.3,947.8 425.1,954.3 421.4,958.8 416.9,962.5 411.7,960.8 407.2,957.6 407.7,952.2 407.0,946.8 407.2,941.3"/>
<polyline points="416.9,999.9 422.3,1001.4 426.7,1004.8 429.0,1000.2 432.0,996.1 434.8,991.8 436.1,986.8 438.1,982.0 442.4,980.3 446.8,979.2 451.2,978.2 456.0,978.7 459.3,982.4 464.1,983.6 465.1,989.5 467.4,995.0 473.9,993.8 480.4,995.0 488.5,991.8 493.4,992.4 498.3,993.1 503.1,991.9 508.0,991.8 514.3,994.1 519.4,998.3 524.3,1002.3 529.2,1006.4 534.8,1003.8 540.5,1001.5 545.3,1005.8 548.7,1011.3 553.1,1008.7 556.6,1004.7 561.7,1003.1 566.0,1006.9 571.3,1008.9 576.3,1011.3 581.6,1011.2 587.0,1011.7 592.2,1010.5 597.5,1009.7 600.5,1014.2 602.4,1019.4 602.2,1026.0 600.7,1032.4 600.9,1039.1 599.1,1045.4 598.7,1051.2 595.1,1056.1 594.2,1061.7 591.0,1068.2 587.0,1071.4 584.9,1076.2 581.2,1079.6 581.3,1084.9 579.2,1089.8 577.8,1094.8 578.0,1100.1"/>
<polyline points="906.5,1054.5 911.4,1053.7 914.8,1049.8 919.5,1048.7 925.9,1050.3 932.5,1050.3 936.8,1052.5 941.5,1053.6 946.3,1053.8 951.0,1054.7 955.3,1056.8 959.3,1059.8 964.2,1060.7 968.3,1063.3 976.5,1060.1 981.3,1065.0 983.0,1071.5 986.5,1075.6 989.4,1080.2 992.7,1084.5 996.3,1088.6 998.5,1093.7 1002.5,1097.5"/>
<polyline points="369.8,1087.7 374.6,1091.3 379.3,1095.0 382.8,1100.1"/>
<polyline points="1258.9,590.0 1257.7,594.8 1256.4,599.7 1255.7,604.6 1251.8,607.3 1249.2,611.1 1249.3,616.1 1249.4,621.1 1250.0,626.0 1252.0,630.7 1252.6,635.5 1254.3,640.3 1254.0,645.3 1252.2,649.5 1249.3,653.0 1248.2,657.6 1244.5,660.7 1242.7,664.8 1241.2,670.1 1238.2,674.6 1234.6,678.9 1234.6,684.8 1231.3,689.2 1233.5,693.6 1233.3,698.5 1234.9,703.0 1234.4,707.9 1237.3,712.2 1235.9,717.3 1237.8,721.8 1233.1,724.2 1229.6,728.3 1225.2,729.6 1221.6,732.5 1217.7,734.9 1213.4,736.4 1209.8,739.3 1206.8,742.9 1203.8,746.3 1200.7,749.7 1197.1,752.7 1196.2,758.1 1194.5,763.4 1193.9,768.9 1190.8,774.0 1188.5,779.3 1187.4,785.2 1183.6,789.2 1179.0,792.2 1174.3,794.9 1172.0,798.8 1169.3,802.4 1167.4,806.6 1165.3,810.6 1163.1,814.6 1159.7,817.7 1160.5,822.2 1160.5,826.8 1159.4,831.5 1159.9,836.0 1161.3,840.5 1156.8,844.2 1152.7,848.3 1149.9,853.5 1150.4,858.3 1152.9,862.3 1154.8,866.5 1151.6,871.0 1149.9,876.3 1152.0,881.0 1151.6,886.0 1146.5,887.8 1141.7,890.1 1136.9,892.5 1134.2,898.5 1130.4,903.9 1126.5,908.1 1121.9,911.8 1119.0,916.9 1122.3,922.6 1125.5,928.3 1129.0,931.5 1133.2,933.6 1136.8,936.5 1140.2,939.7 1141.4,945.0 1145.7,948.9 1146.7,954.3 1141.8,959.2 1144.3,963.3 1144.6,968.1 1146.7,972.2 1141.8,978.7 1143.6,983.6 1146.2,988.1 1146.7,993.4 1151.6,993.3 1156.4,991.9 1161.3,991.8 1161.9,997.5 1163.0,1003.1 1160.7,1007.3 1158.0,1011.2 1155.5,1015.3 1153.2,1019.4 1151.9,1026.0 1149.9,1032.4 1148.5,1037.8 1145.9,1042.6 1141.6,1046.6 1140.2,1051.9 1140.0,1057.4 1141.3,1062.8 1140.2,1068.2 1135.2,1070.7 1131.9,1075.3 1127.2,1078.0 1129.1,1084.3 1128.8,1091.0 1127.1,1095.5 1125.5,1100.1"/>
<polyline points="1260.5,855.1 1260.4,859.7 1259.0,864.1 1258.0,868.5 1257.3,873.0 1258.6,878.4 1258.2,883.9 1258.9,889.3 1259.2,895.9 1257.3,902.3 1256.3,906.9 1255.2,911.5 1255.7,916.5 1253.8,920.9 1253.8,925.8 1251.9,930.2 1250.8,934.8 1246.2,938.5 1243.1,943.4 1239.4,947.8 1238.0,952.6 1237.8,957.6 1231.2,957.7 1224.8,959.2 1221.3,962.6 1216.6,964.1 1211.7,966.3 1208.5,970.6 1201.8,971.6 1195.5,973.9 1192.2,982.0 1188.3,984.7 1183.2,984.4 1179.2,986.9 1172.7,986.4 1166.2,985.3 1158.1,988.5 1152.7,991.8 1146.7,993.4"/>
<polyline points="1398.8,770.5 1396.5,775.1 1396.5,780.3 1395.6,785.2 1391.8,787.9 1389.8,792.4 1385.8,794.9 1384.2,801.4 1384.2,808.0 1387.3,812.4 1388.9,817.4 1390.6,822.5 1392.3,827.5 1396.9,829.7 1399.4,834.2 1403.8,836.6 1406.9,840.5 1408.6,847.0 1411.5,851.3 1412.9,856.5 1416.1,860.7 1417.4,865.9 1420.5,870.2 1423.2,874.6 1423.8,879.9 1426.5,884.4 1430.4,887.8 1434.6,890.9 1440.8,893.7 1447.6,894.2 1450.9,902.3 1447.6,910.4 1452.2,913.0 1457.4,913.7 1463.6,911.2 1470.4,910.4 1474.1,913.5 1478.7,914.9 1482.2,918.4 1486.6,920.2 1487.8,926.0 1489.9,931.6 1494.8,932.5 1499.7,930.5 1504.5,931.2 1509.4,932.2 1514.3,931.6 1518.1,935.5 1522.9,937.8 1528.4,939.0 1532.2,943.0 1535.2,948.8 1538.7,954.3 1544.4,954.9 1549.5,957.7 1555.0,959.2 1558.8,962.7 1564.2,963.7 1568.0,967.4"/>
<polyline points="1553.3,778.7 1546.8,775.4 1546.8,768.9 1551.1,764.7 1553.7,759.4 1556.6,754.3 1559.8,750.5 1563.3,747.1 1567.5,744.4 1571.2,741.3 1577.6,743.0 1584.2,742.9 1588.3,740.8 1591.5,737.4 1595.3,734.9 1599.3,732.8 1603.8,731.5 1608.6,728.3 1611.8,723.3 1616.8,720.1 1620.8,717.3 1624.2,713.8 1628.8,711.8 1632.2,708.1 1636.3,705.5 1640.8,709.2 1643.1,714.9 1647.7,718.5 1652.5,719.1 1657.4,720.1 1662.3,720.1 1664.9,724.7 1667.8,729.0 1673.1,731.5 1675.3,736.4 1681.9,736.8 1688.3,738.0 1693.9,738.1 1699.2,740.2 1704.6,741.3 1706.2,749.4 1711.4,751.5 1716.9,752.4 1722.5,752.7"/>
<polyline points="1330.5,1087.7 1337.0,1086.4 1343.5,1087.7 1345.2,1083.2 1349.1,1080.1 1351.3,1075.8 1353.3,1071.5 1356.3,1067.6 1359.7,1064.1 1362.3,1059.8 1366.3,1056.8 1371.0,1056.1 1374.8,1053.3 1379.3,1051.9 1383.8,1054.6 1388.9,1055.5 1394.3,1055.7 1398.8,1058.4 1400.1,1063.3 1401.2,1068.1 1400.2,1073.3 1402.1,1078.0 1401.4,1083.5 1402.5,1089.1 1401.8,1094.6 1400.4,1100.1"/>
<polyline points="1223.1,1082.8 1223.5,1087.7 1223.1,1092.6 1218.3,1100.1"/>
<polyline points="369.8,1086.9 373.9,1090.5 377.7,1094.4 382.2,1097.6 386.0,1101.5 388.0,1107.9 389.3,1114.5 387.7,1122.7 391.3,1126.9 392.5,1132.4 395.6,1135.8 399.4,1138.6 402.3,1142.2 405.2,1146.2 405.7,1151.1 405.9,1156.1 408.8,1160.1 413.5,1161.4 416.9,1165.0 417.1,1170.0 415.3,1174.7 410.9,1179.3 407.2,1184.5 407.8,1191.0 407.2,1197.5 413.8,1198.5 420.2,1200.7 425.6,1202.9 431.3,1204.5 436.4,1207.2 437.6,1211.9 439.0,1216.4 439.1,1221.3 440.3,1225.8 443.0,1230.0 447.2,1226.2 452.8,1224.7 457.6,1221.9 461.7,1219.6 465.6,1217.0 469.0,1214.0 472.2,1210.5 475.7,1207.5 479.0,1204.3 481.7,1200.5 484.8,1197.1 488.5,1194.2 496.6,1192.6 503.1,1195.9"/>
<polyline points="516.1,1199.1 518.8,1203.3 521.9,1207.1 525.0,1210.9 529.2,1213.8 534.0,1215.1 538.9,1215.4 541.6,1220.6 542.6,1226.5 545.4,1231.6 549.1,1235.4 553.6,1238.1 558.5,1236.0 563.5,1234.2 568.2,1231.6 574.7,1226.8 579.0,1228.8 582.8,1231.6 587.8,1228.5 592.5,1224.9 597.5,1221.9 600.7,1215.4 607.2,1218.6 610.5,1226.8 614.7,1230.4 617.4,1235.2 620.2,1239.8 623.9,1244.4 626.8,1249.5 630.1,1253.1 634.9,1254.4 641.4,1259.3 647.9,1258.4 654.4,1257.7 659.4,1258.9 664.2,1260.9 662.7,1266.6 660.5,1272.0 657.7,1277.2 653.5,1279.7 649.4,1282.4 644.6,1283.7 642.6,1290.1 638.1,1295.1 633.3,1294.0 628.4,1295.2 623.5,1295.2 618.6,1295.1 615.2,1299.0 612.1,1303.2 614.3,1307.9 615.4,1313.0 613.8,1318.3 610.5,1322.7 607.0,1325.9 602.6,1327.3 598.5,1329.3 594.2,1330.9 588.9,1334.4 584.5,1339.0 579.0,1341.0 573.2,1342.2 568.2,1345.5 562.7,1344.9 557.6,1342.2 551.9,1342.2 550.0,1337.8 546.5,1334.1 545.4,1329.2 543.7,1324.5 543.8,1319.5 535.7,1319.5 531.2,1320.1 526.5,1319.8 522.3,1322.3 517.8,1322.7 512.7,1323.6 508.1,1326.2 503.1,1327.6 497.6,1325.8 491.8,1326.0 486.8,1326.8 482.0,1325.2 477.2,1323.7 472.2,1324.4 464.1,1321.1 460.3,1317.0 457.0,1312.6 453.3,1308.5 451.1,1303.2 446.5,1301.6 442.6,1298.9 439.2,1295.4 434.8,1293.5 430.0,1290.3 426.0,1286.1 421.8,1282.1 417.2,1279.0 413.9,1274.5 410.3,1270.3 405.5,1267.4 403.0,1263.5 399.2,1260.6 397.5,1256.0 394.2,1252.8 390.0,1248.5 384.6,1246.0 379.5,1243.0 374.4,1243.4 369.8,1241.4"/>
<polyline points="464.1,1322.7 459.9,1325.3 456.1,1328.5 453.4,1332.8 449.5,1335.7 446.3,1339.3 442.4,1341.9 438.1,1343.9 432.1,1343.2 426.2,1341.7 420.2,1342.2 416.6,1346.5 412.7,1350.5 411.1,1356.1 407.2,1360.1 401.7,1363.0 395.8,1365.0 391.3,1367.3 387.4,1370.4 383.7,1373.8 379.5,1376.4 374.9,1373.5 369.8,1371.5"/>
<polyline points="581.2,1082.0 580.6,1087.0 580.3,1092.0 578.0,1096.6 573.2,1100.9 568.2,1104.8 570.6,1108.9 570.3,1113.8 572.3,1118.1 573.1,1122.7 575.1,1127.5 576.9,1132.5 579.8,1137.0 581.2,1142.2 584.5,1146.2 588.8,1149.5 590.0,1155.1 594.2,1158.4 598.4,1155.3 602.4,1151.9 601.0,1157.4 603.6,1162.8 602.4,1168.2 608.4,1168.0 614.3,1167.7 620.2,1166.6 624.6,1169.5 628.4,1173.1 628.4,1178.7 627.2,1184.1 625.1,1189.4 624.5,1196.1 621.9,1202.4 617.6,1205.1 615.0,1209.7 610.5,1212.1 607.2,1218.6"/>
<polyline points="664.2,1260.9 667.4,1257.3 668.9,1252.7 671.6,1248.8 673.9,1244.7 682.1,1243.0 687.4,1245.4 692.8,1247.5 698.3,1249.5 702.4,1253.1 706.8,1256.3 711.3,1259.3 716.6,1257.2 722.4,1256.7 727.6,1254.4 733.5,1255.4 739.0,1257.7 743.9,1264.2 748.5,1263.1 753.1,1261.6 757.6,1260.0 761.8,1257.7 766.9,1255.9 772.5,1256.0 777.9,1255.3 782.9,1252.8 788.3,1253.2 793.8,1253.3 799.2,1254.4 801.6,1259.3 802.9,1264.7 807.4,1268.6 808.9,1273.9 810.3,1279.6 808.9,1285.3 814.4,1286.9 819.6,1289.0 825.2,1290.2 829.9,1292.0 835.0,1292.0 839.5,1294.8 844.9,1293.8 849.4,1296.3 854.5,1296.7 859.8,1295.0 865.2,1294.3 870.7,1295.1 875.2,1292.0 880.0,1289.6 885.4,1288.6 889.0,1291.4 892.6,1294.4 896.9,1296.4 900.0,1300.0 904.5,1297.6 907.1,1293.2 910.3,1289.5 914.7,1286.9 919.5,1286.0 924.4,1287.6 929.3,1288.1 934.2,1286.9 938.4,1289.1 942.2,1291.8 944.4,1296.3 948.9,1298.1 952.1,1301.6 954.2,1307.2 958.6,1311.3 961.8,1316.2 968.4,1315.8 974.8,1314.6 980.0,1317.5 984.6,1321.1"/>
<polyline points="991.1,1082.0 993.7,1086.1 997.7,1089.1 1001.2,1092.4 1003.3,1097.1 1007.4,1099.9 1010.1,1105.3 1010.6,1111.3 1007.8,1116.5 1007.4,1122.6 1004.1,1127.5 1007.0,1133.4 1010.6,1138.9 1008.2,1143.9 1004.3,1148.2 1002.5,1153.6 1000.8,1158.1 996.9,1161.1 994.4,1165.0 994.2,1170.3 992.4,1175.4 991.9,1180.7 992.7,1186.1 988.2,1189.1 984.5,1193.2 979.7,1195.9 980.0,1200.8 979.6,1205.7 978.7,1210.5 978.1,1215.4 975.4,1220.2 972.3,1224.6 968.3,1228.4 962.8,1228.8 957.4,1230.2 952.1,1231.6 951.5,1237.2 948.5,1242.2 948.8,1247.9 947.1,1252.8 943.8,1256.8 942.3,1261.8 939.1,1265.8 936.8,1270.9 935.6,1276.1 936.0,1281.8 934.2,1286.9 933.9,1291.9 934.1,1296.8 936.0,1301.5 935.8,1306.5 938.3,1310.3 939.9,1314.6 940.9,1319.2 943.9,1322.7 948.8,1323.9 952.7,1327.3 957.2,1329.1 961.8,1330.9 964.4,1335.3 966.5,1339.9 968.2,1344.8 971.6,1348.8 974.5,1353.9 974.9,1360.0 978.1,1365.0"/>
<polyline points="952.1,1303.2 956.7,1302.4 961.4,1303.1 966.1,1302.8 970.6,1300.5 975.4,1301.9 980.1,1301.8 984.6,1300.0 992.7,1298.3"/>
<polyline points="1036.6,1293.5 1041.3,1293.5 1045.9,1293.4 1050.5,1294.3 1054.7,1297.4 1059.4,1296.7 1064.3,1293.3 1070.7,1293.4 1075.7,1290.2 1080.5,1289.2 1085.2,1290.9 1090.0,1290.2"/>
<polyline points="1128.8,1082.0 1130.7,1088.4 1130.4,1095.0 1127.5,1099.0 1122.9,1101.1 1120.5,1105.6 1116.4,1108.4 1112.5,1111.3 1107.1,1112.7 1102.5,1115.6 1097.4,1117.6 1093.0,1121.0"/>
<polyline points="1223.1,1082.0 1221.8,1086.9 1223.1,1091.8 1222.8,1097.1 1219.9,1101.5 1219.0,1108.2 1216.6,1114.5 1212.7,1118.1 1209.7,1122.3 1207.9,1127.5 1203.6,1130.8 1202.0,1135.7 1200.4,1140.6 1195.9,1144.4 1190.6,1147.1 1187.4,1153.6 1183.1,1157.0 1179.3,1161.0 1174.3,1163.3 1171.1,1168.2 1175.5,1173.2 1177.6,1179.6 1173.2,1183.7 1171.1,1189.4 1167.1,1193.5 1161.7,1196.1 1158.1,1200.7 1153.9,1205.6 1148.3,1208.9 1142.9,1211.1 1137.9,1214.2 1132.0,1215.4 1128.9,1218.8 1126.2,1222.5 1122.3,1225.1 1120.2,1229.9 1120.0,1235.2 1116.8,1239.6 1115.8,1244.7 1117.4,1249.0 1120.1,1252.9 1120.7,1257.7 1115.4,1260.2 1109.8,1262.0 1104.4,1264.2 1104.6,1269.1 1107.4,1273.2 1109.1,1277.6 1108.3,1282.8 1110.9,1286.9 1105.8,1287.0 1101.0,1288.5 1096.3,1290.2 1090.8,1290.3 1085.3,1290.0 1080.0,1288.6"/>
<polyline points="1330.5,1086.9 1335.5,1087.0 1340.2,1088.5 1343.7,1085.0 1348.4,1083.6 1350.0,1082.0"/>
<polyline points="1400.4,1082.0 1402.2,1087.3 1401.5,1092.8 1402.1,1098.3 1404.7,1103.0 1406.8,1108.1 1409.7,1112.7 1411.8,1117.8 1415.4,1121.1 1416.2,1126.2 1418.8,1130.2 1421.6,1134.0 1424.7,1138.5 1428.0,1142.8 1431.3,1147.1 1436.0,1149.2 1441.1,1150.3"/>
</g>
<g stroke="#b4b4b4" stroke-width="1.5">
<line x1="655" y1="98" x2="655" y2="1525"/>
<line x1="1649" y1="98" x2="1649" y2="1525"/>
<line x1="370" y1="297.5" x2="1808" y2="297.5"/>
<line x1="370" y1="1198.2" x2="1808" y2="1198.2"/>
</g>
<g stroke="#fcaa32" stroke-width="2" fill="none">
<line x1="1367" y1="98" x2="1367" y2="1088.5"/>
<line x1="1563" y1="98" x2="1563" y2="434.7"/>
<line x1="1563" y1="434.7" x2="1741" y2="434.7"/>
<line x1="1741" y1="402.3" x2="1741" y2="579.4"/>
<line x1="1741" y1="402.3" x2="1757.8" y2="402.3"/>
<line x1="1757.8" y1="297" x2="1757.8" y2="402.3"/>
<line x1="1647.8" y1="297" x2="1808" y2="297"/>
<line x1="1681.4" y1="98" x2="1681.4" y2="297"/>
<line x1="1607.7" y1="434.7" x2="1607.7" y2="847"/>
<line x1="1607.7" y1="847" x2="1665" y2="847"/>
<line x1="1665" y1="695.7" x2="1665" y2="847"/>
<line x1="1665" y1="696" x2="1808" y2="696"/>
<line x1="1763.5" y1="579.4" x2="1763.5" y2="696"/>
<line x1="1741" y1="579.4" x2="1808" y2="579.4"/>
<line x1="1648" y1="527.8" x2="1808" y2="527.8"/>
<line x1="1647.7" y1="978.7" x2="1808" y2="978.7"/>
<line x1="1367" y1="1196.5" x2="1808" y2="1196.5"/>
<line x1="1614.5" y1="1337.4" x2="1614.5" y2="1475.6"/>
<line x1="1614.5" y1="1337.4" x2="1746.9" y2="1337.4"/>
<line x1="1512.7" y1="1475.6" x2="1808" y2="1475.6"/>
<line x1="1512.7" y1="1475.6" x2="1512.7" y2="1525"/>
<line x1="1746.9" y1="1199" x2="1746.9" y2="1525"/>
<line x1="1760" y1="1199" x2="1760" y2="1306.5"/>
<line x1="1746.9" y1="1194" x2="1800" y2="1194"/>
<line x1="1797.3" y1="1194" x2="1797.3" y2="1525"/>
<line x1="1746.9" y1="1306.5" x2="1808" y2="1306.5"/>
<line x1="1719" y1="1312" x2="1808" y2="1312"/>
<line x1="1719" y1="1312" x2="1719" y2="1413"/>
<line x1="1746.9" y1="1358.5" x2="1808" y2="1358.5"/>
<line x1="1797.3" y1="1251" x2="1808" y2="1251"/>
<line x1="1698" y1="1465.9" x2="1797.3" y2="1465.9"/>
<line x1="1698" y1="1465.9" x2="1698" y2="1519.5"/>
<line x1="1647.7" y1="1519.5" x2="1808" y2="1519.5"/>
<line x1="852.8" y1="1199" x2="852.8" y2="1525"/>
<line x1="1647.2" y1="98" x2="1647.2" y2="979"/>
<g stroke="#ee6a3c"><line x1="405" y1="141" x2="405" y2="188"/><line x1="398" y1="152.5" x2="403" y2="152.5"/><line x1="407" y1="152.5" x2="412" y2="152.5"/></g>
<polyline points="1647.7,1045.4 1760,1054 1795,1060 1808,1068"/>
<polyline points="1808,1189 1790,1260 1746.9,1339 1733.9,1375 1732,1413"/>
<polyline points="1722.5,1420 1724,1451 1746.9,1457.6 1808,1457.6"/>
</g>
<polyline points="370,1196.5 1367,1196.5 1367,1088.5 1647.7,1088.5 1647.7,1413 1808,1413" fill="none" stroke="#f81010" stroke-width="2.2"/>
<ellipse cx="1079" cy="461" rx="10.6" ry="10.2" fill="#8c6c26"/>
<ellipse cx="1524" cy="287.8" rx="10.6" ry="10.2" fill="#8c6c26"/>
<ellipse cx="1670.6" cy="304.7" rx="10.6" ry="10.2" fill="#8c6c26"/>
<ellipse cx="1795.3" cy="388.2" rx="10.6" ry="10.2" fill="#8c6c26"/>
<ellipse cx="1800.7" cy="543.6" rx="10.6" ry="10.2" fill="#8c6c26"/>
<ellipse cx="950.4" cy="733.1" rx="10.6" ry="10.2" fill="#8c6c26"/>
<ellipse cx="1577.7" cy="973.9" rx="10.6" ry="10.2" fill="#8c6c26"/>
<ellipse cx="1735.5" cy="756" rx="10.6" ry="10.2" fill="#8c6c26"/>
<ellipse cx="1790.8" cy="677.8" rx="10.6" ry="10.2" fill="#8c6c26"/>
<ellipse cx="561.7" cy="1470.7" rx="10.6" ry="10.2" fill="#8c6c26"/>
<ellipse cx="693.4" cy="1501.6" rx="10.6" ry="10.2" fill="#8c6c26"/>
<ellipse cx="992.7" cy="1296.7" rx="10.6" ry="10.2" fill="#8c6c26"/>
<ellipse cx="1018.7" cy="1344.8" rx="10.6" ry="10.2" fill="#8c6c26"/>
<ellipse cx="953.7" cy="1359.2" rx="10.6" ry="10.2" fill="#8c6c26"/>
<ellipse cx="1010.6" cy="1389.4" rx="10.6" ry="10.2" fill="#8c6c26"/>
<ellipse cx="1079" cy="1352" rx="10.6" ry="10.2" fill="#8c6c26"/>
<ellipse cx="1452.5" cy="1148.7" rx="10.6" ry="10.2" fill="#8c6c26"/>
<ellipse cx="1320.7" cy="1267.4" rx="10.6" ry="10.2" fill="#8c6c26"/>
<ellipse cx="1698" cy="1169.8" rx="10.6" ry="10.2" fill="#8c6c26"/>
<ellipse cx="1678.6" cy="1352" rx="10.6" ry="10.2" fill="#8c6c26"/>
<g font-family="Liberation Sans, sans-serif" font-size="18.5" fill="#1e1e1e">
<text x="1533.8" y="319.6">Nanjing</text>
<text x="1680.4" y="335.40000000000003">Jiangyin</text>
<text x="1089.8" y="492.0">Hankow</text>
<text x="960.2" y="763.4">Chang Sha</text>
<text x="1745.3" y="785.5">Wenzhou</text>
<text x="1462.2" y="1179.8999999999999">Xiamen</text>
<text x="1330.5" y="1297.0">Shantou</text>
<text x="1089.8" y="1383.2">Yantian</text>
<text x="1709.5" y="1199.3999999999999">Taichung</text>
<text x="1688.3" y="1383.2">Kaohsiung</text>
<text x="1004.1" y="1326.3">Guangzhou</text>
<text x="963.5" y="1389.7">Jiangmen</text>
<text x="1020.4" y="1419.0">Zhuhai</text>
<text x="571.5" y="1501.8999999999999">Beihai</text>
<text x="704.8" y="1529.6">Zhanjiang</text>
<text x="1589" y="996.8" clip-path="url(#cf)">Fuzhou</text>
<text x="1802" y="414">S</text><text x="1801" y="709">R</text>
</g>
<g font-family="Liberation Sans, sans-serif" font-size="17.5" fill="#a01214" stroke="#a01214" stroke-width="0.35">
<text x="374" y="319">32°0.00'N</text><text x="374.6" y="1219.7">24°0.00'N</text>
</g>
<rect x="395" y="1249.5" width="5.6" height="18.5" fill="#8c9c8c"/>
<rect x="395" y="1267.9" width="5.6" height="18.5" fill="#e8803c"/>
<rect x="395" y="1286.3" width="5.6" height="18.5" fill="#8c9c8c"/>
<rect x="395" y="1304.6" width="5.6" height="18.5" fill="#e8803c"/>
<rect x="395" y="1323.0" width="5.6" height="18.5" fill="#8c9c8c"/>
<rect x="395" y="1341.4" width="5.6" height="18.5" fill="#e8803c"/>
<rect x="395" y="1359.8" width="5.6" height="18.5" fill="#8c9c8c"/>
<rect x="395" y="1378.2" width="5.6" height="18.5" fill="#e8803c"/>
<rect x="395" y="1396.5" width="5.6" height="18.5" fill="#8c9c8c"/>
<rect x="395" y="1414.9" width="5.6" height="18.5" fill="#e8803c"/>
<text x="410" y="1443.5" font-family="Liberation Serif, serif" font-weight="bold" font-size="20" fill="#c40000">100海里</text>
</svg>
  <div class="dd"><svg class="abs" style="left:454px;top:16px" width="13" height="8" viewBox="0 0 13 8"><polyline points="1,1 6.5,6.5 12,1" fill="none" stroke="#a9aed3" stroke-width="1.8"/></svg></div>
  <div class="tabs"><div class="t1">产品类型</div><div class="sp"></div><div class="t2">操作</div></div>
  <div class="pill"></div>
  <div class="nav"><svg width="40" height="40" viewBox="0 0 40 40"><path d="M31.2,9.4 L7.6,20.8 L19.5,21.5 L24.8,33 Z" fill="#fff"/></svg></div>
  <div class="coord">109° 53.73′ E 24° 41.36′ N</div>
  <div class="rp">
    <div class="rph"></div>
    <div class="rpline"></div>
    <svg class="abs" style="left:34px;top:1.5px" width="48" height="48" viewBox="0 0 48 48">
      <circle cx="24" cy="24" r="24" fill="#4550f3"/>
      <circle cx="24" cy="23.8" r="19.6" fill="#fff"/>
      <clipPath id="avc"><circle cx="24" cy="23.8" r="19.6"/></clipPath>
      <g clip-path="url(#avc)">
      <path d="M23,26 L31,25 L34,36 L24,37 Z" fill="#fdb7a3"/>
      <path d="M13,44 Q16,36 24,35 L31,34 Q38,35 40,44 Z" fill="#df35ef"/>
      <path d="M21,35 L25,40 L33,34 L29,33 L25,37 L23,34 Z" fill="#4a62f0"/>
      <ellipse cx="20.5" cy="22.5" rx="5" ry="7" fill="#fdc0ab"/>
      <path d="M13,14 Q15,7 21,7.5 Q28,6.5 31,12 Q33,17 31,22 Q31.5,26 29.5,27 L28,21 Q25,16 21,15 Q18,16 16,19 Q13,18 13,14Z" fill="#0c0c0c"/>
      </g>
    </svg>
    <svg class="abs" style="left:389.2px;top:12px" width="26" height="26" viewBox="0 0 26 26"><path d="M2.6,18.2 A11,11 0 1 1 9.8,22.6 Q6.5,21.2 3.6,24.4" fill="none" stroke="#fff" stroke-width="1.9"/><path d="M9.6,9.6 Q9.6,6.6 12.9,6.6 Q16.3,6.6 16.3,9.6 Q16.3,11.4 14.2,12.6 Q13,13.4 13,15.2" fill="none" stroke="#fff" stroke-width="2.4"/><rect x="11.8" y="16.4" width="2.5" height="2.5" fill="#fff"/></svg>
    <svg class="abs" style="left:424.8px;top:10.5px" width="28" height="28" viewBox="0 0 28 28"><polygon points="8,2.3 20,2.3 26,13.8 20,25.3 8,25.3 2,13.8" fill="none" stroke="#fff" stroke-width="1.9" stroke-linejoin="round"/><circle cx="14" cy="13.8" r="4.6" fill="none" stroke="#fff" stroke-width="2"/></svg>
    <div class="tile" style="left:63px"><svg width="79" height="79" viewBox="0 0 79 79"><path d="M18.1,18 L39,29.3 L39,61.5 L18.1,53.4 Z" fill="#e0e5fb"/><path d="M40,29.3 L49.5,24 L49.5,57 L40,61.5 Z" fill="#e0e5fb"/><path d="M50.5,23.5 L60.8,18 L60.8,53.4 L45,61 Z" fill="#e0e5fb"/></svg></div>
    <div class="tile" style="left:156px"><svg width="79" height="79" viewBox="0 0 79 79"><g fill="none" stroke="#e0e5fb"><circle cx="39.7" cy="19.8" r="4.6" stroke-width="2.6"/><line x1="29.5" y1="33.3" x2="49.5" y2="33.3" stroke-width="4.6" stroke-linecap="round"/><line x1="39.7" y1="24" x2="39.7" y2="58" stroke-width="3.6"/><path d="M17.5,47.5 Q39.7,69 62,47.5" stroke-width="4"/></g><path d="M14,44 L24,46.5 L17,55 Z M65.5,44 L55.5,46.5 L62.5,55 Z" fill="#e0e5fb"/></svg></div>
    <div class="tile" style="left:249px"><svg width="79" height="79" viewBox="0 0 79 79"><path d="M24.5,18 L41.8,18 L41.8,32.5 L59,32.5 L59,57 Q59,60 56,60 L24.5,60 Q21.2,60 21.2,57 L21.2,21 Q21.2,18 24.5,18 Z" fill="#e0e5fb"/><path d="M44.3,19.3 L57.5,31 L44.3,31 Z" fill="#e0e5fb"/><rect x="26.8" y="31.8" width="11.2" height="3" fill="#6386f2"/><rect x="26.8" y="42" width="25.7" height="3" fill="#6386f2"/></svg></div>
    <div class="tile" style="left:342px"><svg width="79" height="79" viewBox="0 0 79 79"><g stroke="#e0e5fb" fill="none"><circle cx="40.8" cy="39.8" r="17.2" stroke-width="5.6"/><g stroke-width="2.6"><line x1="40.8" y1="12.3" x2="40.8" y2="67.3"/><line x1="13.3" y1="39.8" x2="68.3" y2="39.8"/><line x1="22.3" y1="21.3" x2="59.3" y2="58.3"/><line x1="59.3" y1="21.3" x2="22.3" y2="58.3"/></g></g><circle cx="40.8" cy="39.8" r="3.5" fill="#e0e5fb"/></svg></div>
    <div class="tlab" style="left:52px">图书目录</div>
    <div class="tlab" style="left:145px">航路计划</div>
    <div class="tlab" style="left:238px">订单管理</div>
    <div class="tlab" style="left:331px">航线管理</div>
    <div class="avcs">AVCS</div>
    <div class="search"></div>
    <svg class="abs" style="left:444px;top:236px" width="26" height="26" viewBox="0 0 26 26"><circle cx="10.5" cy="10" r="7" fill="none" stroke="#c4c6dc" stroke-width="3.4"/><line x1="15.8" y1="15.5" x2="22.5" y2="22" stroke="#c4c6dc" stroke-width="3.8" stroke-linecap="round"/></svg>
    <div class="card">
      <div class="inner">
        <svg class="abs" style="left:66px;top:15px" width="22" height="18" viewBox="0 0 22 18"><path d="M2,7 Q11,-1 20,7" fill="none" stroke="#4a60ea" stroke-width="2.4"/><path d="M5.5,10.5 Q11,5.5 16.5,10.5" fill="none" stroke="#4a60ea" stroke-width="2.4"/><circle cx="11" cy="15" r="2" fill="#4a60ea"/></svg>
        <div class="abs" style="left:93px;top:14px;font-size:16.5px">网络同步</div>
        <svg class="abs" style="left:276px;top:16.5px" width="22" height="16" viewBox="0 0 22 16"><rect x="0" y="0" width="22" height="16" rx="1.5" fill="#4a60ea"/><polyline points="1.5,1.5 11,9 20.5,1.5" fill="none" stroke="#e8eefc" stroke-width="1.6"/><polyline points="1.5,14.5 8,8 M20.5,14.5 14,8" fill="none" stroke="#e8eefc" stroke-width="1.3"/></svg>
        <div class="abs" style="left:304px;top:14px;font-size:16.5px">邮件同步</div>
      </div>
      <div class="small" style="left:30px">上次更新时间</div>
      <div class="small" style="left:129px;color:#222">2022-12-01</div>
      <div class="small" style="left:252.5px">上次更新结果</div>
      <div class="abs" style="left:351.5px;top:67px;font-size:16px;color:#27b38f">成功</div>
    </div>
    <div class="table">
      <div class="th"><div style="left:14px;width:86px">编号</div><span class="hs" style="left:116px"></span><div style="left:116px;width:116px">标题</div><span class="hs" style="left:231px"></span><div style="left:231px;width:116px">类型</div><span class="hs" style="left:347px"></span><div style="left:347px;width:116px;font-family:'Liberation Mono',monospace;font-size:15px;top:5px">SAP IPM</div></div>
<div class="tr" style="top:28.00px;height:47.40px"><svg class="chev" width="14" height="9" viewBox="0 0 14 9"><polyline points="1,1.5 7,7.5 13,1.5" fill="none" stroke="#a9aed0" stroke-width="1.8"/></svg><div class="c1">1U318200</div><div class="c2">SOUTH<br>CHINA SEA...</div><div class="c3">AVCS Units<br>Coastal</div><div class="c4">515344</div></div>
<div class="tr" style="top:75.40px;height:48.80px"><svg class="chev" width="14" height="9" viewBox="0 0 14 9"><polyline points="1,1.5 7,7.5 13,1.5" fill="none" stroke="#a9aed0" stroke-width="1.8"/></svg><div class="c1">1U318210</div><div class="c2">BETWEEN<br>DONGSHA ...</div><div class="c3">AVCS Units<br>Coastal</div><div class="c4">515336</div></div>
<div class="tr" style="top:124.20px;height:48.80px"><svg class="chev" width="14" height="9" viewBox="0 0 14 9"><polyline points="1,1.5 7,7.5 13,1.5" fill="none" stroke="#a9aed0" stroke-width="1.8"/></svg><div class="c1">1U318220</div><div class="c2">South China<br>Sea Taiwan...</div><div class="c3">AVCS Units<br>Coastal</div><div class="c4">515724</div></div>
<div class="tr" style="top:173.00px;height:47.20px"><svg class="chev" width="14" height="9" viewBox="0 0 14 9"><polyline points="1,1.5 7,7.5 13,1.5" fill="none" stroke="#a9aed0" stroke-width="1.8"/></svg><div class="c1">1U319200</div><div class="c2 l2">South Chin...</div><div class="c3 l3">AVCS Units...</div><div class="c4">515345</div></div>
<div class="tr" style="top:220.20px;height:47.10px"><svg class="chev" width="14" height="9" viewBox="0 0 14 9"><polyline points="1,1.5 7,7.5 13,1.5" fill="none" stroke="#a9aed0" stroke-width="1.8"/></svg><div class="c1">1U319210</div><div class="c2 l2">SOUTHEAS...</div><div class="c3 l3">AVCS Units...</div><div class="c4">515184</div></div>
<div class="tr" style="top:267.30px;height:47.70px"><svg class="chev" width="14" height="9" viewBox="0 0 14 9"><polyline points="1,1.5 7,7.5 13,1.5" fill="none" stroke="#a9aed0" stroke-width="1.8"/></svg><div class="c1">1U319220</div><div class="c2 l2">WATERS S...</div><div class="c3 l3">AVCS Units...</div><div class="c4">515243</div></div>
<div class="tr" style="top:315.00px;height:47.20px"><svg class="chev" width="14" height="9" viewBox="0 0 14 9"><polyline points="1,1.5 7,7.5 13,1.5" fill="none" stroke="#a9aed0" stroke-width="1.8"/></svg><div class="c1">1U319230</div><div class="c2 l2">PENGHU IS...</div><div class="c3 l3">AVCS Units...</div><div class="c4">515312</div></div>
<div class="tr" style="top:362.20px;height:47.10px"><svg class="chev" width="14" height="9" viewBox="0 0 14 9"><polyline points="1,1.5 7,7.5 13,1.5" fill="none" stroke="#a9aed0" stroke-width="1.8"/></svg><div class="c1">1U319240</div><div class="c2 l2">SOUTH OF ...</div><div class="c3 l3">AVCS Units...</div><div class="c4">514766</div></div>
<div class="tr" style="top:409.30px;height:47.20px"><svg class="chev" width="14" height="9" viewBox="0 0 14 9"><polyline points="1,1.5 7,7.5 13,1.5" fill="none" stroke="#a9aed0" stroke-width="1.8"/></svg><div class="c1">1U320200</div><div class="c2 l2">SOUTH CH...</div><div class="c3 l3">AVCS Units...</div><div class="c4">515431</div></div>
<div class="tr" style="top:456.50px;height:47.70px"><svg class="chev" width="14" height="9" viewBox="0 0 14 9"><polyline points="1,1.5 7,7.5 13,1.5" fill="none" stroke="#a9aed0" stroke-width="1.8"/></svg><div class="c1">1U320210</div><div class="c2 l2">WATERS S...</div><div class="c3 l3">AVCS Units...</div><div class="c4">515244</div></div>
<div class="tr" style="top:504.20px;height:47.10px"><svg class="chev" width="14" height="9" viewBox="0 0 14 9"><polyline points="1,1.5 7,7.5 13,1.5" fill="none" stroke="#a9aed0" stroke-width="1.8"/></svg><div class="c1">1U320220</div><div class="c2 l2">S TAIWAN ...</div><div class="c3 l3">AVCS Units...</div><div class="c4">515402</div></div>
<div class="tr" style="top:551.30px;height:47.20px"><svg class="chev" width="14" height="9" viewBox="0 0 14 9"><polyline points="1,1.5 7,7.5 13,1.5" fill="none" stroke="#a9aed0" stroke-width="1.8"/></svg><div class="c1">1U320230</div><div class="c2 l2">W COAST ...</div><div class="c3 l3">AVCS Units...</div><div class="c4">514730</div></div>
<div class="tr" style="top:598.50px;height:47.30px"><svg class="chev" width="14" height="9" viewBox="0 0 14 9"><polyline points="1,1.5 7,7.5 13,1.5" fill="none" stroke="#a9aed0" stroke-width="1.8"/></svg><div class="c1">1U320240</div><div class="c2 l2">CHANGHU...</div><div class="c3 l3">AVCS Units...</div><div class="c4">515245</div></div>
<div class="tr" style="top:645.80px;height:47.30px"><svg class="chev" width="14" height="9" viewBox="0 0 14 9"><polyline points="1,1.5 7,7.5 13,1.5" fill="none" stroke="#a9aed0" stroke-width="1.8"/></svg><div class="c1">1U320250</div><div class="c2 l2">NORTHEAS...</div><div class="c3 l3">AVCS Units...</div><div class="c4">515267</div></div>
<div class="tr" style="top:693.10px;height:47.30px"><svg class="chev" width="14" height="9" viewBox="0 0 14 9"><polyline points="1,1.5 7,7.5 13,1.5" fill="none" stroke="#a9aed0" stroke-width="1.8"/></svg><div class="c1">1U321210</div><div class="c2 l2">BASHI CHA...</div><div class="c3 l3">AVCS Units...</div><div class="c4">515062</div></div>
<div class="tr" style="top:740.40px;height:47.40px"><svg class="chev" width="14" height="9" viewBox="0 0 14 9"><polyline points="1,1.5 7,7.5 13,1.5" fill="none" stroke="#a9aed0" stroke-width="1.8"/></svg><div class="c1">1U321220</div><div class="c2 l2">AROUND T...</div><div class="c3 l3">AVCS Units...</div><div class="c4">515113</div></div>
<div class="tr" style="top:787.80px;height:47.30px"><svg class="chev" width="14" height="9" viewBox="0 0 14 9"><polyline points="1,1.5 7,7.5 13,1.5" fill="none" stroke="#a9aed0" stroke-width="1.8"/></svg><div class="c1">1U321230</div><div class="c2 l2">TAITUNG S...</div><div class="c3 l3">AVCS Units...</div><div class="c4">515016</div></div>
<div class="tr" style="top:835.10px;height:47.00px"><svg class="chev" width="14" height="9" viewBox="0 0 14 9"><polyline points="1,1.5 7,7.5 13,1.5" fill="none" stroke="#a9aed0" stroke-width="1.8"/></svg><div class="c1">1U321240</div><div class="c2 l2">CHILAIPI T...</div><div class="c3 l3">AVCS Units...</div><div class="c4">514749</div></div>
<div class="tr" style="top:882.10px;height:47.30px"><svg class="chev" width="14" height="9" viewBox="0 0 14 9"><polyline points="1,1.5 7,7.5 13,1.5" fill="none" stroke="#a9aed0" stroke-width="1.8"/></svg><div class="c1">1U321250</div><div class="c2 l2">BAISHAJIA ...</div><div class="c3 l3">AVCS Units...</div><div class="c4">515215</div></div>
<div class="tr" style="top:929.40px;height:47.20px"><svg class="chev" width="14" height="9" viewBox="0 0 14 9"><polyline points="1,1.5 7,7.5 13,1.5" fill="none" stroke="#a9aed0" stroke-width="1.8"/></svg><div class="c1">1U321260</div><div class="c2 l2">East China ...</div><div class="c3 l3">AVCS Units...</div><div class="c4">516050</div></div>
      <div class="hsb"></div>
    </div>
    <div class="pg" style="left:14px;width:71px">首页</div>
    <div class="pg" style="left:93px;width:69px">上一页</div>
    <div class="abs" style="left:234.5px;top:1390.5px;font-size:15px;color:#dfe5ff;white-space:pre">1  /902</div>
    <div class="pg" style="left:328.5px;width:71px">下一页</div>
    <div class="pg" style="left:408px;width:69px">尾页</div>
  </div>
</div>
</body></html>
